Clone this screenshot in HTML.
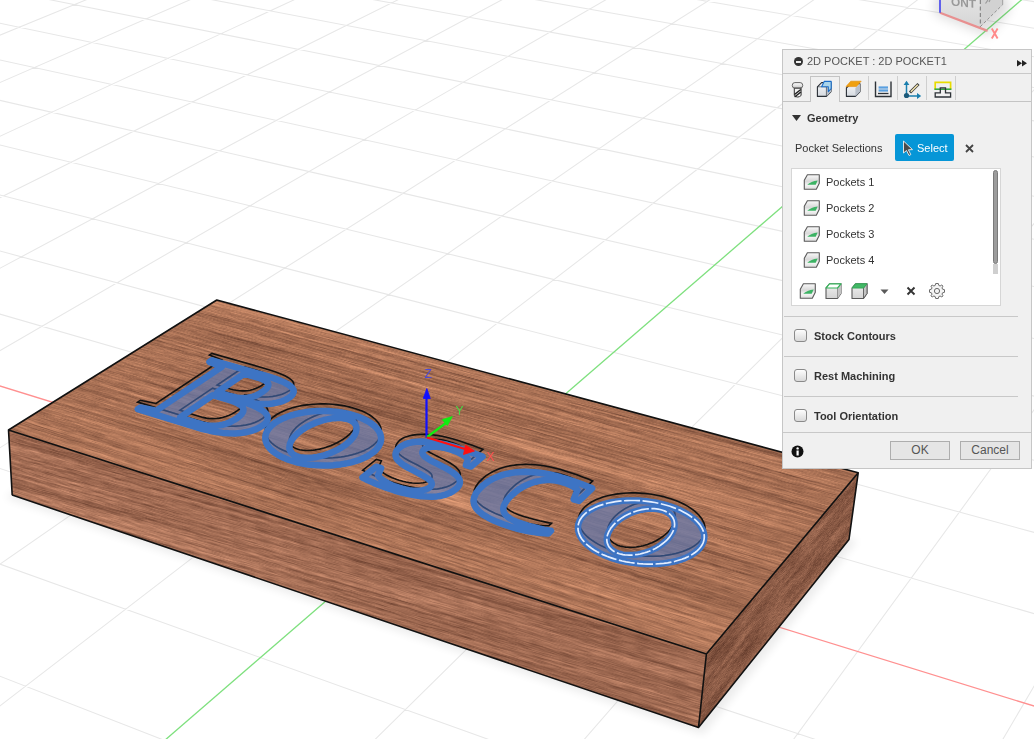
<!DOCTYPE html>
<html><head><meta charset="utf-8">
<style>
html,body{margin:0;padding:0;width:1034px;height:739px;overflow:hidden;background:#fff;font-family:"Liberation Sans",sans-serif;}
.face{position:absolute;left:0;top:0;transform-origin:0 0;}
#scene{position:absolute;left:0;top:0;width:1034px;height:739px;}
#panel{position:absolute;left:782px;top:49px;width:248px;height:418px;background:#f0f0f0;border:1px solid #c6c6c6;box-sizing:content-box;color:#333;font-size:11px;}
.abs{position:absolute;}
.hdr{left:0;top:0;width:248px;height:23px;border-bottom:1px solid #c9c9c9;}
.title{left:24px;top:5px;color:#555;font-size:11px;letter-spacing:0px;white-space:nowrap;}
.minus{left:11px;top:7px;width:9px;height:9px;border-radius:50%;background:#333;}
.minus:after{content:"";position:absolute;left:2px;top:3.5px;width:5px;height:2px;background:#f0f0f0;}
.tabs{left:0;top:24px;width:248px;height:27px;border-bottom:1px solid #c4c4c4;}
.tab-act{left:27px;top:2px;width:30px;height:26px;border:1px solid #c4c4c4;border-bottom:none;background:#f0f0f0;box-sizing:border-box;}
.sep{top:2px;width:1px;height:24px;background:#cfcfcf;}
.sec{font-weight:bold;font-size:11px;color:#333;white-space:nowrap;}
.cb{width:11px;height:11px;border:1px solid #8a8a8a;border-radius:3px;background:linear-gradient(#fdfdfd,#d9d9d9);}
.hr{left:1px;width:234px;height:1px;background:#c8c8c8;}
.btn{height:17px;border:1px solid #adadad;background:#e5e5e5;color:#555;font-size:12px;text-align:center;line-height:17px;}
.lst{left:8px;top:118px;width:208px;height:136px;background:#fff;border:1px solid #d6d6d6;}
.item{left:43px;font-size:11px;color:#333;white-space:nowrap;}
</style></head><body>
<div id="scene"><svg width="1034" height="739" viewBox="0 0 1034 739" style="position:absolute;left:0;top:0">
<defs><filter id="blur6" x="-20%" y="-20%" width="140%" height="140%"><feGaussianBlur stdDeviation="6"/></filter><filter id="blur4" x="-20%" y="-20%" width="140%" height="140%"><feGaussianBlur stdDeviation="4"/></filter></defs>
<path d="M-4791.2 240L264.9 -496.2M-4821.8 265.1L288.5 -494.8M-4854.1 291.7L312.5 -493.3M-4888.2 319.6L336.8 -491.8M-4924.2 349.1L361.3 -490.3M-4962.2 380.4L386.2 -488.8M-5002.5 413.5L411.4 -487.3M-5045.3 448.6L436.9 -485.8M-5090.9 486L462.7 -484.2M-5139.3 525.8L488.9 -482.6M-5191.1 568.3L515.4 -481M-5246.5 613.8L542.2 -479.4M-5305.9 662.5L569.4 -477.7M-5369.8 715L597 -476.1M-5438.7 771.5L624.9 -474.4M-5513.2 832.7L653.2 -472.7M-5594 899L681.9 -470.9M-5681.9 971.2L710.9 -469.2M-5778 1050.1L740.4 -467.4M-5883.5 1136.7L770.3 -465.6M-5999.7 1232.1L800.6 -463.7M-6128.5 1337.8L831.3 -461.9M-6271.9 1455.6L862.4 -460M-6432.6 1587.5L894 -458.1M-6614 1736.4L926 -456.1M-6820.3 1905.7L958.5 -454.2M-7056.9 2100L991.4 -452.2M-7331.2 2325.2L1024.8 -450.1M-7653 2589.3L1058.7 -448.1M-8035.6 2903.4L1093.2 -446M-8498.1 3283.1L1128.1 -443.9M-9068.6 3751.4L1163.5 -441.7M-9789.7 4343.4L1199.5 -439.6M-10730.4 5115.6L1236 -437.3M-12008.7 6165L1273.1 -435.1M-13846.3 7673.6L1310.8 -432.8M-16713.1 10027L1349 -430.5M-21809.7 14211L1387.9 -428.1M-33393.9 23720.8L1427.4 -425.7M-30520.4 24191.3L1467.4 -423.3M-23419.5 24193.6L1549.6 -418.3M-19869.1 24194.7L1591.6 -415.8M-16318.6 24195.9L1634.4 -413.2M-12768.2 24197L1677.9 -410.6M-9217.7 24198.1L1722.1 -407.9M-5667.3 24199.3L1767 -405.2M-2116.9 24200.4L1812.7 -402.4M1433.6 24201.6L1859.2 -399.6M4984 24202.7L1906.5 -396.7M8534.5 24203.8L1954.6 -393.8M12084.9 24205L2003.6 -390.8M15635.4 24206.1L2053.4 -387.8M19185.8 24207.2L2104.1 -384.7M22736.2 24208.4L2155.8 -381.6M26286.7 24209.5L2208.4 -378.4M29837.1 24210.6L2261.9 -375.2M33387.6 24211.8L2316.5 -371.9M36938 24212.9L2372 -368.5M40488.4 24214.1L2428.7 -365.1M44038.9 24215.2L2486.4 -361.6M47589.3 24216.3L2545.2 -358M51139.8 24217.5L2605.2 -354.4M54690.2 24218.6L2666.3 -350.7M58240.6 24219.7L2728.7 -346.9M61791.1 24220.9L2792.3 -343M65341.5 24222L2857.2 -339.1M68892 24223.2L2923.4 -335.1M72442.4 24224.3L2991 -331M75992.8 24225.4L3060.1 -326.8M79543.3 24226.6L3130.5 -322.5M83093.7 24227.7L3202.5 -318.2M86644.2 24228.8L3276.1 -313.7M90194.6 24230L3351.2 -309.2M93745 24231.1L3428 -304.5M97295.5 24232.3L3506.5 -299.8M100845.9 24233.4L3586.8 -294.9M104396.4 24234.5L3669 -289.9M107946.8 24235.7L3753 -284.8M111497.3 24236.8L3839 -279.6M115047.7 24237.9L3927 -274.3M-4791.2 240L-33965.7 24190.2M-4538.3 203.1L-28416.2 24192M-4303.8 169L-22866.7 24193.8M-4086 137.3L-17317.1 24195.5M-3883 107.7L-11767.6 24197.3M-3693.4 80.1L-6218.1 24199.1M-3515.9 54.3L-668.5 24200.9M-3349.4 30.1L4881 24202.7M-3192.9 7.3L10430.5 24204.4M-3045.5 -14.2L15980.1 24206.2M-2906.5 -34.4L21529.6 24208M-2775.1 -53.6L27079.1 24209.8M-2650.8 -71.7L32628.7 24211.5M-2532.9 -88.8L38178.2 24213.3M-2421.1 -105.1L43727.7 24215.1M-2314.7 -120.6L49277.3 24216.9M-2213.6 -135.3L54826.8 24218.7M-2117.2 -149.4L60376.3 24220.4M-2025.3 -162.7L65925.9 24222.2M-1937.5 -175.5L71475.4 24224M-1773.3 -199.4L82574.4 24227.5M-1696.4 -210.6L88124 24229.3M-1622.7 -221.4L93673.5 24231.1M-1552 -231.7L99223 24232.9M-1484.1 -241.5L104772.6 24234.6M-1418.8 -251L110322.1 24236.4M-1356.1 -260.2L100238.8 20971.2M-1295.6 -269L54156.7 10806M-1237.5 -277.5L37475.4 7126.2M-1181.4 -285.6L28862.9 5226.4M-1127.3 -293.5L23605 4066.5M-1075.1 -301.1L20061.3 3284.8M-1024.7 -308.4L17510.9 2722.2M-975.9 -315.5L15587.5 2297.9M-928.8 -322.4L14085.3 1966.6M-883.3 -329L12879.5 1700.6M-839.2 -335.4L11890.3 1482.4M-796.5 -341.7L11064.1 1300.1M-755.1 -347.7L10363.7 1145.6M-715 -353.5L9762.5 1013M-676.1 -359.2L9240.7 897.9M-638.3 -364.7L8783.5 797M-601.7 -370L8379.7 708M-566.1 -375.2L8020.5 628.7M-531.5 -380.2L7698.8 557.8M-497.9 -385.1L7409.1 493.8M-465.3 -389.9L7146.7 436M-433.5 -394.5L6908.1 383.3M-402.6 -399L6690.1 335.2M-372.4 -403.4L6490.2 291.1M-343.1 -407.7L6306.2 250.6M-314.6 -411.8L6136.2 213.1M-286.7 -415.9L5978.8 178.3M-259.6 -419.8L5832.6 146.1M-233.2 -423.7L5696.4 116M-207.4 -427.4L5569.3 88M-182.2 -431.1L5450.3 61.8M-157.6 -434.7L5338.7 37.1M-133.6 -438.2L5233.9 14M-110.2 -441.6L5135.2 -7.8M-87.3 -444.9L5042.1 -28.3M-65 -448.2L4954.2 -47.7M-43.1 -451.3L4871 -66M-21.8 -454.5L4792.2 -83.4M-0.9 -457.5L4717.4 -99.9M19.6 -460.5L4646.3 -115.6M39.6 -463.4L4578.7 -130.5M59.1 -466.2L4514.3 -144.7M78.3 -469L4452.8 -158.3M97 -471.7L4394.2 -171.2M115.4 -474.4L4338.2 -183.6M133.3 -477L4284.6 -195.4M151 -479.6L4233.2 -206.7M168.2 -482.1L4184 -217.6M185.1 -484.6L4136.8 -228M201.7 -487L4091.5 -238M218 -489.4L4048 -247.6M233.9 -491.7L4006.1 -256.8M249.5 -494L3965.8 -265.7M264.9 -496.2L3927 -274.3" stroke="#e7e7e7" stroke-width="1.05" fill="none"/>
<path d="M-1853.6 -187.7L77024.9 24225.8" stroke="#ff9090" stroke-width="1.3" fill="none"/>
<path d="M-26969.9 24192.5L1508.2 -420.8" stroke="#7ee07e" stroke-width="1.3" fill="none"/>
<polygon points="5.2,497.4 703.2,734.6 857.4,540.3 217.3,359.5" fill="#000" opacity="0.07" filter="url(#blur4)"/>
</svg>
<div class="face" style="width:1000px;height:200px;overflow:hidden;transform:matrix3d(0.58360849,0.1182101,0,-0.00016173076,0.019106479,0.36231869,0,7.486625e-05,0,0,1,0,8.5290133,430.04686,0,1)"><svg width="1000" height="200"><filter id="wf" x="0" y="0" width="100%" height="100%" color-interpolation-filters="sRGB"><feTurbulence type="fractalNoise" baseFrequency="0.002 0.03" numOctaves="3" seed="21"/><feColorMatrix type="matrix" values="1 0 0 0 0  1 0 0 0 0  1 0 0 0 0  0 0 0 0 1" result="lo"/><feTurbulence type="fractalNoise" baseFrequency="0.006 0.12" numOctaves="2" seed="5"/><feColorMatrix type="matrix" values="1 0 0 0 0  1 0 0 0 0  1 0 0 0 0  0 0 0 0 1" result="mid"/><feTurbulence type="fractalNoise" baseFrequency="0.05 0.35" numOctaves="2" seed="17"/><feColorMatrix type="matrix" values="1 0 0 0 0  1 0 0 0 0  1 0 0 0 0  0 0 0 0 1" result="hi"/><feComposite in="lo" in2="mid" operator="arithmetic" k1="0" k2="0.6" k3="0.5" k4="0" result="lm"/><feComposite in="lm" in2="hi" operator="arithmetic" k1="0" k2="1" k3="0.45" k4="-0.275" result="n"/><feColorMatrix in="n" type="matrix" values="0.6 0 0 0 0.33  0.48 0 0 0 0.18  0.4 0 0 0 0.125  0 0 0 0 1"/></filter><g transform="rotate(-5 500 100)"><rect x="-100" y="-150" width="1200" height="500" filter="url(#wf)"/></g></svg></div>
<div class="face" style="width:500px;height:200px;overflow:hidden;transform:matrix3d(0.56238993,-0.21988844,0,0.0003015666,0.022792771,0.43222233,0,8.9310506e-05,0,0,1,0,706.38105,654.03445,0,1)"><svg width="500" height="200"><filter id="wr" x="0" y="0" width="100%" height="100%" color-interpolation-filters="sRGB"><feTurbulence type="fractalNoise" baseFrequency="0.01 0.04" numOctaves="2" seed="31"/><feColorMatrix type="matrix" values="1 0 0 0 0  1 0 0 0 0  1 0 0 0 0  0 0 0 0 1" result="lo"/><feTurbulence type="fractalNoise" baseFrequency="0.12 0.3" numOctaves="2" seed="2"/><feColorMatrix type="matrix" values="1 0 0 0 0  1 0 0 0 0  1 0 0 0 0  0 0 0 0 1" result="hi"/><feComposite in="lo" in2="hi" operator="arithmetic" k1="0" k2="0.6" k3="0.5" k4="-0.05" result="n"/><feColorMatrix in="n" type="matrix" values="0.5 0 0 0 0.29  0.4 0 0 0 0.152  0.33 0 0 0 0.105  0 0 0 0 1"/></filter><rect width="500" height="200" filter="url(#wr)"/></svg></div>
<div class="face" style="width:1000px;height:500px;transform:matrix3d(0.51811971,0.10494533,0,-0.00014358238,-0.41853288,0.16364187,0,-0.00022442709,0,0,1,0,216.83838,299.96884,0,1)"><svg width="1000" height="500"><filter id="wt" x="0" y="0" width="100%" height="100%" color-interpolation-filters="sRGB"><feTurbulence type="fractalNoise" baseFrequency="0.0015 0.022" numOctaves="3" seed="4"/><feColorMatrix type="matrix" values="1 0 0 0 0  1 0 0 0 0  1 0 0 0 0  0 0 0 0 1" result="lo"/><feTurbulence type="fractalNoise" baseFrequency="0.004 0.16" numOctaves="3" seed="9"/><feColorMatrix type="matrix" values="1 0 0 0 0  1 0 0 0 0  1 0 0 0 0  0 0 0 0 1" result="mid"/><feTurbulence type="fractalNoise" baseFrequency="0.05 0.45" numOctaves="2" seed="13"/><feColorMatrix type="matrix" values="1 0 0 0 0  1 0 0 0 0  1 0 0 0 0  0 0 0 0 1" result="hi"/><feComposite in="lo" in2="mid" operator="arithmetic" k1="0" k2="0.4" k3="0.6" k4="0" result="lm"/><feComposite in="lm" in2="hi" operator="arithmetic" k1="0" k2="1" k3="0.4" k4="-0.2" result="n"/><feColorMatrix in="n" type="matrix" values="0.63 0 0 0 0.35  0.48 0 0 0 0.205  0.37 0 0 0 0.15  0 0 0 0 1"/></filter><rect width="1000" height="500" filter="url(#wt)"/></svg></div>

<svg width="1034" height="739" viewBox="0 0 1034 739" style="position:absolute;left:0;top:0">
<path d="M140.3 400.3L137.6 402.1L157.8 408.2L195.2 419.8L202.5 421.9L209.5 423.5L216.3 424.8L222.8 425.6L229 426.1L235 426.2L240.5 425.8L245.7 425.1L250.5 424L254.9 422.5L259 420.6L262.7 418.3L264.9 416.4L266.5 414.7L267.5 412.9L267.9 411.1L267.6 409.3L266.8 407.6L265.4 405.8L263.4 404L260.7 402.2L257.5 400.5L253.6 398.7L243.8 394.9L243.8 394.9L254.5 396.4L258.2 396.8L261.9 397L265.6 397L269.1 396.8L272.7 396.4L276.1 395.8L279.2 395.1L282.1 394.2L284.7 393.1L287.1 391.9L289.3 390.6L291.6 388.6L293.1 386.7L293.8 384.9L293.6 383.1L292.7 381.3L291 379.5L288.4 377.7L285 375.8L280.8 373.9L275.7 371.9L269.7 369.9L262.9 367.9L211.9 353.4L209.4 355.1L221.7 359.9L156 403.5ZM239.6 409L237.3 410.7L234.5 412.5L231.6 414.1L228.7 415.5L225.7 416.6L222.7 417.5L219.5 418.1L216.3 418.5L213.1 418.6L209.7 418.5L206.4 418.1L203 417.4L199.7 416.5L197.2 415.8L194.5 414.9L191.5 414L188.3 412.9L184.8 411.8L180 410.2L212.6 388.2L228 392.7L231.9 393.9L235.3 395.2L238.1 396.6L240.4 397.9L242 399.4L243 400.8L243.4 402.4L243.3 403.9L242.6 405.6L241.4 407.2ZM264.9 383L263 384.5L260.5 386.1L258 387.5L255.5 388.6L252.9 389.5L250.3 390.2L247.6 390.7L244.9 390.9L242.1 390.9L239.2 390.7L236.3 390.3L233.3 389.7L230.4 389L217.1 385.1L244.2 366.8L256.7 370.3L259.7 371.2L262.3 372.2L264.4 373.2L266.1 374.3L267.4 375.4L268.1 376.5L268.4 377.7L268.2 378.9L267.5 380.2L266.5 381.6Z" fill="#2a1508" fill-opacity="0.12" fill-rule="nonzero"/>
<path d="M140.3 400.3L137.6 402.1L157.8 408.2L195.2 419.8L202.5 421.9L209.5 423.5L216.3 424.8L222.8 425.6L229 426.1L235 426.2L240.5 425.8L245.7 425.1L250.5 424L254.9 422.5L259 420.6L262.7 418.3L264.9 416.4L266.5 414.7L267.5 412.9L267.9 411.1L267.6 409.3L266.8 407.6L265.4 405.8L263.4 404L260.7 402.2L257.5 400.5L253.6 398.7L243.8 394.9L243.8 394.9L254.5 396.4L258.2 396.8L261.9 397L265.6 397L269.1 396.8L272.7 396.4L276.1 395.8L279.2 395.1L282.1 394.2L284.7 393.1L287.1 391.9L289.3 390.6L291.6 388.6L293.1 386.7L293.8 384.9L293.6 383.1L292.7 381.3L291 379.5L288.4 377.7L285 375.8L280.8 373.9L275.7 371.9L269.7 369.9L262.9 367.9L211.9 353.4L209.4 355.1L221.7 359.9L156 403.5ZM239.6 409L237.3 410.7L234.5 412.5L231.6 414.1L228.7 415.5L225.7 416.6L222.7 417.5L219.5 418.1L216.3 418.5L213.1 418.6L209.7 418.5L206.4 418.1L203 417.4L199.7 416.5L197.2 415.8L194.5 414.9L191.5 414L188.3 412.9L184.8 411.8L180 410.2L212.6 388.2L228 392.7L231.9 393.9L235.3 395.2L238.1 396.6L240.4 397.9L242 399.4L243 400.8L243.4 402.4L243.3 403.9L242.6 405.6L241.4 407.2ZM264.9 383L263 384.5L260.5 386.1L258 387.5L255.5 388.6L252.9 389.5L250.3 390.2L247.6 390.7L244.9 390.9L242.1 390.9L239.2 390.7L236.3 390.3L233.3 389.7L230.4 389L217.1 385.1L244.2 366.8L256.7 370.3L259.7 371.2L262.3 372.2L264.4 373.2L266.1 374.3L267.4 375.4L268.1 376.5L268.4 377.7L268.2 378.9L267.5 380.2L266.5 381.6Z" fill="none" stroke="#111" stroke-width="1.6"/>
<path d="M373.3 445.1L375.1 443.5L376.7 441.9L378.1 440.3L379.2 438.6L380.1 436.8L380.8 435.1L381.2 433.3L381.3 431.5L381.2 429.8L380.9 428L380.3 426.2L379.4 424.5L378.3 422.8L377 421.2L375.5 419.5L373.8 418L371.8 416.5L369.7 415L367.3 413.6L364.8 412.3L362.1 411.1L359.2 409.9L356.3 408.9L353.1 407.9L349.9 407.1L346.5 406.3L343.1 405.6L339.5 405.1L335.9 404.6L332.3 404.2L328.6 404L324.9 403.9L321.2 403.9L317.5 404L313.8 404.2L310.2 404.5L306.6 404.9L303.1 405.4L299.7 406L296.3 406.8L293.1 407.6L290 408.6L287 409.6L284.2 410.7L281.5 411.9L279 413.2L276.7 414.5L274.6 416L272.6 417.4L270.9 419L269.4 420.6L268.2 422.2L267.1 423.9L266.3 425.7L265.7 427.4L265.4 429.2L265.4 430.9L265.5 432.7L266 434.5L266.6 436.2L267.5 438L268.7 439.7L270.1 441.4L271.7 443L273.6 444.6L275.7 446.1L278 447.6L280.5 449L283.2 450.3L286.1 451.5L289.1 452.6L292.3 453.7L295.6 454.6L299.1 455.5L302.7 456.2L306.3 456.8L310.1 457.3L313.9 457.7L317.7 457.9L321.6 458.1L325.5 458.1L329.4 458L333.2 457.8L337 457.4L340.8 457L344.4 456.4L348 455.7L351.4 454.9L354.8 454L357.9 453L361 451.9L363.8 450.7L366.5 449.4L369 448.1L371.2 446.6ZM344.4 438.3L342.7 439.5L340.8 440.6L338.9 441.7L336.9 442.8L334.9 443.8L332.8 444.8L330.6 445.7L328.4 446.5L326.2 447.3L324 447.9L321.8 448.5L319.5 449.1L317.3 449.5L315.1 449.9L313 450.2L310.9 450.4L308.8 450.5L306.8 450.5L304.9 450.4L303.1 450.3L301.3 450L299.7 449.7L298.1 449.3L296.7 448.8L295.4 448.2L294.2 447.6L293.1 446.9L292.1 446.1L291.3 445.2L290.7 444.3L290.2 443.3L289.8 442.3L289.5 441.2L289.5 440L289.5 438.9L289.7 437.7L290.1 436.4L290.6 435.2L291.2 433.9L292 432.6L292.9 431.3L293.9 430L295.1 428.7L296.3 427.4L297.7 426.2L299.2 424.9L300.8 423.7L302.5 422.5L304.2 421.4L306.1 420.2L308 419.2L310 418.2L312 417.2L314.1 416.3L316.2 415.4L318.3 414.6L320.5 413.9L322.6 413.3L324.8 412.7L327 412.2L329.1 411.8L331.2 411.4L333.3 411.2L335.3 411L337.3 410.9L339.2 410.9L341.1 410.9L342.9 411.1L344.6 411.3L346.2 411.6L347.7 412L349.1 412.5L350.4 413L351.6 413.6L352.7 414.3L353.7 415L354.5 415.9L355.2 416.7L355.7 417.7L356.2 418.7L356.5 419.7L356.6 420.8L356.6 422L356.5 423.1L356.2 424.3L355.8 425.6L355.2 426.8L354.5 428.1L353.7 429.4L352.7 430.7L351.6 432L350.4 433.3L349.1 434.6L347.6 435.8L346.1 437.1Z" fill="#2a1508" fill-opacity="0.12" fill-rule="nonzero"/>
<path d="M373.3 445.1L375.1 443.5L376.7 441.9L378.1 440.3L379.2 438.6L380.1 436.8L380.8 435.1L381.2 433.3L381.3 431.5L381.2 429.8L380.9 428L380.3 426.2L379.4 424.5L378.3 422.8L377 421.2L375.5 419.5L373.8 418L371.8 416.5L369.7 415L367.3 413.6L364.8 412.3L362.1 411.1L359.2 409.9L356.3 408.9L353.1 407.9L349.9 407.1L346.5 406.3L343.1 405.6L339.5 405.1L335.9 404.6L332.3 404.2L328.6 404L324.9 403.9L321.2 403.9L317.5 404L313.8 404.2L310.2 404.5L306.6 404.9L303.1 405.4L299.7 406L296.3 406.8L293.1 407.6L290 408.6L287 409.6L284.2 410.7L281.5 411.9L279 413.2L276.7 414.5L274.6 416L272.6 417.4L270.9 419L269.4 420.6L268.2 422.2L267.1 423.9L266.3 425.7L265.7 427.4L265.4 429.2L265.4 430.9L265.5 432.7L266 434.5L266.6 436.2L267.5 438L268.7 439.7L270.1 441.4L271.7 443L273.6 444.6L275.7 446.1L278 447.6L280.5 449L283.2 450.3L286.1 451.5L289.1 452.6L292.3 453.7L295.6 454.6L299.1 455.5L302.7 456.2L306.3 456.8L310.1 457.3L313.9 457.7L317.7 457.9L321.6 458.1L325.5 458.1L329.4 458L333.2 457.8L337 457.4L340.8 457L344.4 456.4L348 455.7L351.4 454.9L354.8 454L357.9 453L361 451.9L363.8 450.7L366.5 449.4L369 448.1L371.2 446.6ZM344.4 438.3L342.7 439.5L340.8 440.6L338.9 441.7L336.9 442.8L334.9 443.8L332.8 444.8L330.6 445.7L328.4 446.5L326.2 447.3L324 447.9L321.8 448.5L319.5 449.1L317.3 449.5L315.1 449.9L313 450.2L310.9 450.4L308.8 450.5L306.8 450.5L304.9 450.4L303.1 450.3L301.3 450L299.7 449.7L298.1 449.3L296.7 448.8L295.4 448.2L294.2 447.6L293.1 446.9L292.1 446.1L291.3 445.2L290.7 444.3L290.2 443.3L289.8 442.3L289.5 441.2L289.5 440L289.5 438.9L289.7 437.7L290.1 436.4L290.6 435.2L291.2 433.9L292 432.6L292.9 431.3L293.9 430L295.1 428.7L296.3 427.4L297.7 426.2L299.2 424.9L300.8 423.7L302.5 422.5L304.2 421.4L306.1 420.2L308 419.2L310 418.2L312 417.2L314.1 416.3L316.2 415.4L318.3 414.6L320.5 413.9L322.6 413.3L324.8 412.7L327 412.2L329.1 411.8L331.2 411.4L333.3 411.2L335.3 411L337.3 410.9L339.2 410.9L341.1 410.9L342.9 411.1L344.6 411.3L346.2 411.6L347.7 412L349.1 412.5L350.4 413L351.6 413.6L352.7 414.3L353.7 415L354.5 415.9L355.2 416.7L355.7 417.7L356.2 418.7L356.5 419.7L356.6 420.8L356.6 422L356.5 423.1L356.2 424.3L355.8 425.6L355.2 426.8L354.5 428.1L353.7 429.4L352.7 430.7L351.6 432L350.4 433.3L349.1 434.6L347.6 435.8L346.1 437.1Z" fill="none" stroke="#111" stroke-width="1.6"/>
<path d="M456.4 481.4L458.2 479.7L459.4 478L460.1 476.3L460.3 474.5L460 472.8L459.3 471L457.9 469.2L456 467.2L453.3 465.2L450.1 463L446.1 460.8L441.6 458.4L437.3 456.3L433.6 454.4L430.4 452.7L427.9 451.2L425.8 449.8L424.4 448.6L423.4 447.5L422.8 446.4L422.6 445.3L422.8 444.3L423.4 443.3L424.3 442.3L425.5 441.5L426.9 440.8L428.4 440.2L430.2 439.8L432.1 439.5L434.2 439.4L436.5 439.4L438.8 439.6L441.3 439.9L443.9 440.4L446.6 441L449.5 441.8L451.4 442.4L453.3 443.1L455.2 443.8L457 444.5L458.9 445.3L460.7 446.2L462.4 447.1L463.9 448L465.2 448.9L466.4 449.8L467.4 450.7L468.3 451.8L466.2 457.7L471.4 459.2L483 449.3L478.1 447.4L472.3 445.3L466.9 443.4L461.9 441.7L457.4 440.3L453.2 439L447.5 437.5L442 436.3L436.6 435.4L431.4 434.7L426.3 434.4L421.4 434.3L416.7 434.6L412.6 435.1L408.8 435.9L405.6 436.9L402.7 438.3L400.1 440L398.3 441.7L397 443.4L396.1 445.1L395.7 446.8L395.8 448.5L396.4 450.3L397.5 452.1L399.2 454.1L401.7 456.1L404.8 458.3L408.5 460.5L413 462.8L417.4 465L421.2 467.1L424.4 468.9L427 470.5L429 471.9L430.4 473.1L431.4 474.2L431.9 475.4L432.1 476.5L431.9 477.6L431.3 478.7L430.2 479.7L428.9 480.7L427.2 481.5L425.3 482.2L423.1 482.7L420.7 483L418.1 483.2L415.3 483.2L412.4 483L409.3 482.6L406 482L402.7 481.2L399.1 480.2L396.7 479.4L394.4 478.6L392.2 477.7L390.1 476.7L388.1 475.7L386.2 474.7L384.4 473.6L382.8 472.5L381.4 471.4L380.2 470.4L379.2 469.3L378.2 468L381.4 460.8L376.3 459.3L362.7 470.2L363.4 470.5L365.3 471.5L367.5 472.5L370 473.7L372.8 474.9L375.9 476.2L379.2 477.5L382.4 478.8L385.5 479.9L388.7 481L391.7 482.1L394.7 483L401.9 485L408.7 486.6L415.1 487.9L421.2 488.7L427 489.1L432.4 489.2L437.4 488.9L442 488.1L446.1 487.1L449.9 485.6L453.4 483.7Z" fill="#2a1508" fill-opacity="0.12" fill-rule="nonzero"/>
<path d="M456.4 481.4L458.2 479.7L459.4 478L460.1 476.3L460.3 474.5L460 472.8L459.3 471L457.9 469.2L456 467.2L453.3 465.2L450.1 463L446.1 460.8L441.6 458.4L437.3 456.3L433.6 454.4L430.4 452.7L427.9 451.2L425.8 449.8L424.4 448.6L423.4 447.5L422.8 446.4L422.6 445.3L422.8 444.3L423.4 443.3L424.3 442.3L425.5 441.5L426.9 440.8L428.4 440.2L430.2 439.8L432.1 439.5L434.2 439.4L436.5 439.4L438.8 439.6L441.3 439.9L443.9 440.4L446.6 441L449.5 441.8L451.4 442.4L453.3 443.1L455.2 443.8L457 444.5L458.9 445.3L460.7 446.2L462.4 447.1L463.9 448L465.2 448.9L466.4 449.8L467.4 450.7L468.3 451.8L466.2 457.7L471.4 459.2L483 449.3L478.1 447.4L472.3 445.3L466.9 443.4L461.9 441.7L457.4 440.3L453.2 439L447.5 437.5L442 436.3L436.6 435.4L431.4 434.7L426.3 434.4L421.4 434.3L416.7 434.6L412.6 435.1L408.8 435.9L405.6 436.9L402.7 438.3L400.1 440L398.3 441.7L397 443.4L396.1 445.1L395.7 446.8L395.8 448.5L396.4 450.3L397.5 452.1L399.2 454.1L401.7 456.1L404.8 458.3L408.5 460.5L413 462.8L417.4 465L421.2 467.1L424.4 468.9L427 470.5L429 471.9L430.4 473.1L431.4 474.2L431.9 475.4L432.1 476.5L431.9 477.6L431.3 478.7L430.2 479.7L428.9 480.7L427.2 481.5L425.3 482.2L423.1 482.7L420.7 483L418.1 483.2L415.3 483.2L412.4 483L409.3 482.6L406 482L402.7 481.2L399.1 480.2L396.7 479.4L394.4 478.6L392.2 477.7L390.1 476.7L388.1 475.7L386.2 474.7L384.4 473.6L382.8 472.5L381.4 471.4L380.2 470.4L379.2 469.3L378.2 468L381.4 460.8L376.3 459.3L362.7 470.2L363.4 470.5L365.3 471.5L367.5 472.5L370 473.7L372.8 474.9L375.9 476.2L379.2 477.5L382.4 478.8L385.5 479.9L388.7 481L391.7 482.1L394.7 483L401.9 485L408.7 486.6L415.1 487.9L421.2 488.7L427 489.1L432.4 489.2L437.4 488.9L442 488.1L446.1 487.1L449.9 485.6L453.4 483.7Z" fill="none" stroke="#111" stroke-width="1.6"/>
<path d="M548.9 525.7L551.5 523.2L549.5 522.9L544.7 521.9L539.7 520.8L534.5 519.5L529.2 518.1L523.7 516.5L518.6 514.8L514.1 512.9L510.4 510.9L507.5 508.8L505.4 506.5L504.1 504.2L503.7 501.7L504.1 499L505.2 496.2L507.2 493.2L509.9 490L513.3 486.7L515.6 484.7L518 482.9L520.4 481.2L522.9 479.7L525.5 478.3L528.1 477.1L530.8 476L533.5 475.1L536.3 474.3L539.1 473.6L542 473.2L544.8 472.8L547.7 472.7L550.5 472.6L553.3 472.8L556 473.1L558.7 473.6L561.2 474.2L563.3 474.8L565.2 475.5L566.9 476.1L568.5 476.7L570 477.2L571.3 477.8L572.5 478.4L573.6 479.1L574.7 479.8L575.7 480.5L576.7 481.3L578 482.4L574.3 491.8L579.5 493.4L592.7 480.9L588.3 479.1L582.6 476.9L577 474.8L571.5 472.9L566 471.2L560.7 469.6L555.5 468.2L550.3 467L545.3 466L540.3 465.3L535.3 464.8L530.4 464.5L525.6 464.4L521 464.5L516.5 464.9L512.1 465.5L507.9 466.2L503.8 467.3L499.9 468.5L496.2 470L492.6 471.7L489.3 473.6L486.1 475.7L483.1 478.1L479 482.1L476.2 486L474.4 489.8L473.9 493.4L474.5 497L476.2 500.4L479.2 503.7L483.3 507L488.7 510.2L495.3 513.4L503.2 516.5L512.4 519.5L515.6 520.4L519 521.3L522.3 522.1L525.7 522.9L529.1 523.6L532.6 524.2L536 524.7L539.1 525.2L542.1 525.5L544.9 525.7L547.5 525.7Z" fill="#2a1508" fill-opacity="0.12" fill-rule="nonzero"/>
<path d="M548.9 525.7L551.5 523.2L549.5 522.9L544.7 521.9L539.7 520.8L534.5 519.5L529.2 518.1L523.7 516.5L518.6 514.8L514.1 512.9L510.4 510.9L507.5 508.8L505.4 506.5L504.1 504.2L503.7 501.7L504.1 499L505.2 496.2L507.2 493.2L509.9 490L513.3 486.7L515.6 484.7L518 482.9L520.4 481.2L522.9 479.7L525.5 478.3L528.1 477.1L530.8 476L533.5 475.1L536.3 474.3L539.1 473.6L542 473.2L544.8 472.8L547.7 472.7L550.5 472.6L553.3 472.8L556 473.1L558.7 473.6L561.2 474.2L563.3 474.8L565.2 475.5L566.9 476.1L568.5 476.7L570 477.2L571.3 477.8L572.5 478.4L573.6 479.1L574.7 479.8L575.7 480.5L576.7 481.3L578 482.4L574.3 491.8L579.5 493.4L592.7 480.9L588.3 479.1L582.6 476.9L577 474.8L571.5 472.9L566 471.2L560.7 469.6L555.5 468.2L550.3 467L545.3 466L540.3 465.3L535.3 464.8L530.4 464.5L525.6 464.4L521 464.5L516.5 464.9L512.1 465.5L507.9 466.2L503.8 467.3L499.9 468.5L496.2 470L492.6 471.7L489.3 473.6L486.1 475.7L483.1 478.1L479 482.1L476.2 486L474.4 489.8L473.9 493.4L474.5 497L476.2 500.4L479.2 503.7L483.3 507L488.7 510.2L495.3 513.4L503.2 516.5L512.4 519.5L515.6 520.4L519 521.3L522.3 522.1L525.7 522.9L529.1 523.6L532.6 524.2L536 524.7L539.1 525.2L542.1 525.5L544.9 525.7L547.5 525.7Z" fill="none" stroke="#111" stroke-width="1.6"/>
<path d="M700 541L701.5 539.2L702.8 537.3L703.8 535.4L704.5 533.4L704.9 531.4L705.1 529.3L705 527.3L704.6 525.2L704 523.1L703 521.1L701.9 519L700.4 517L698.8 515L696.9 513.1L694.7 511.2L692.4 509.4L689.8 507.6L687.1 505.9L684.1 504.3L681 502.8L677.7 501.3L674.3 500L670.8 498.8L667.1 497.7L663.3 496.6L659.5 495.7L655.6 495L651.6 494.3L647.6 493.8L643.6 493.4L639.5 493.1L635.5 492.9L631.5 492.9L627.5 493L623.6 493.3L619.8 493.6L616 494.1L612.4 494.7L608.9 495.5L605.5 496.3L602.3 497.3L599.2 498.4L596.3 499.6L593.5 500.9L591 502.3L588.7 503.8L586.6 505.3L584.7 507L583.1 508.7L581.7 510.6L580.5 512.4L579.6 514.3L579 516.3L578.6 518.3L578.5 520.4L578.7 522.4L579.1 524.5L579.8 526.6L580.8 528.6L582.1 530.7L583.6 532.7L585.3 534.7L587.3 536.7L589.6 538.6L592.1 540.4L594.8 542.2L597.7 543.9L600.8 545.6L604.1 547.1L607.6 548.5L611.2 549.9L614.9 551.1L618.8 552.2L622.8 553.2L626.9 554L631.1 554.7L635.3 555.3L639.5 555.8L643.8 556.1L648 556.2L652.2 556.3L656.4 556.2L660.5 555.9L664.5 555.5L668.4 554.9L672.2 554.3L675.8 553.5L679.3 552.5L682.6 551.5L685.8 550.3L688.7 549L691.4 547.6L693.9 546.1L696.2 544.5L698.2 542.8ZM666.8 533.1L665.2 534.5L663.6 535.8L661.8 537.1L660 538.4L658.1 539.5L656.1 540.7L654 541.7L651.9 542.7L649.7 543.5L647.5 544.4L645.3 545.1L643.1 545.7L640.8 546.2L638.5 546.6L636.3 547L634.1 547.2L631.9 547.3L629.7 547.4L627.6 547.3L625.6 547.1L623.6 546.8L621.7 546.4L619.9 546L618.2 545.4L616.6 544.7L615.2 543.9L613.8 543.1L612.5 542.2L611.4 541.2L610.4 540.1L609.6 538.9L608.9 537.7L608.3 536.4L607.9 535.1L607.6 533.7L607.5 532.3L607.5 530.9L607.6 529.4L607.9 527.9L608.4 526.4L609 524.9L609.7 523.4L610.6 521.9L611.6 520.4L612.7 518.9L613.9 517.5L615.3 516L616.8 514.7L618.3 513.3L620 512L621.7 510.8L623.6 509.6L625.5 508.4L627.5 507.4L629.5 506.4L631.5 505.5L633.7 504.6L635.8 503.9L638 503.2L640.1 502.6L642.3 502.2L644.5 501.8L646.7 501.4L648.8 501.2L650.9 501.1L653 501.1L655 501.2L657 501.3L658.9 501.6L660.7 502L662.5 502.4L664.1 502.9L665.7 503.6L667.2 504.3L668.5 505.1L669.8 506L670.9 506.9L671.9 507.9L672.8 509L673.6 510.2L674.2 511.4L674.7 512.7L675 514L675.2 515.4L675.3 516.8L675.2 518.2L675 519.7L674.6 521.2L674.1 522.7L673.5 524.2L672.7 525.7L671.7 527.2L670.7 528.7L669.5 530.2L668.2 531.7Z" fill="#2a1508" fill-opacity="0.12" fill-rule="nonzero"/>
<path d="M700 541L701.5 539.2L702.8 537.3L703.8 535.4L704.5 533.4L704.9 531.4L705.1 529.3L705 527.3L704.6 525.2L704 523.1L703 521.1L701.9 519L700.4 517L698.8 515L696.9 513.1L694.7 511.2L692.4 509.4L689.8 507.6L687.1 505.9L684.1 504.3L681 502.8L677.7 501.3L674.3 500L670.8 498.8L667.1 497.7L663.3 496.6L659.5 495.7L655.6 495L651.6 494.3L647.6 493.8L643.6 493.4L639.5 493.1L635.5 492.9L631.5 492.9L627.5 493L623.6 493.3L619.8 493.6L616 494.1L612.4 494.7L608.9 495.5L605.5 496.3L602.3 497.3L599.2 498.4L596.3 499.6L593.5 500.9L591 502.3L588.7 503.8L586.6 505.3L584.7 507L583.1 508.7L581.7 510.6L580.5 512.4L579.6 514.3L579 516.3L578.6 518.3L578.5 520.4L578.7 522.4L579.1 524.5L579.8 526.6L580.8 528.6L582.1 530.7L583.6 532.7L585.3 534.7L587.3 536.7L589.6 538.6L592.1 540.4L594.8 542.2L597.7 543.9L600.8 545.6L604.1 547.1L607.6 548.5L611.2 549.9L614.9 551.1L618.8 552.2L622.8 553.2L626.9 554L631.1 554.7L635.3 555.3L639.5 555.8L643.8 556.1L648 556.2L652.2 556.3L656.4 556.2L660.5 555.9L664.5 555.5L668.4 554.9L672.2 554.3L675.8 553.5L679.3 552.5L682.6 551.5L685.8 550.3L688.7 549L691.4 547.6L693.9 546.1L696.2 544.5L698.2 542.8ZM666.8 533.1L665.2 534.5L663.6 535.8L661.8 537.1L660 538.4L658.1 539.5L656.1 540.7L654 541.7L651.9 542.7L649.7 543.5L647.5 544.4L645.3 545.1L643.1 545.7L640.8 546.2L638.5 546.6L636.3 547L634.1 547.2L631.9 547.3L629.7 547.4L627.6 547.3L625.6 547.1L623.6 546.8L621.7 546.4L619.9 546L618.2 545.4L616.6 544.7L615.2 543.9L613.8 543.1L612.5 542.2L611.4 541.2L610.4 540.1L609.6 538.9L608.9 537.7L608.3 536.4L607.9 535.1L607.6 533.7L607.5 532.3L607.5 530.9L607.6 529.4L607.9 527.9L608.4 526.4L609 524.9L609.7 523.4L610.6 521.9L611.6 520.4L612.7 518.9L613.9 517.5L615.3 516L616.8 514.7L618.3 513.3L620 512L621.7 510.8L623.6 509.6L625.5 508.4L627.5 507.4L629.5 506.4L631.5 505.5L633.7 504.6L635.8 503.9L638 503.2L640.1 502.6L642.3 502.2L644.5 501.8L646.7 501.4L648.8 501.2L650.9 501.1L653 501.1L655 501.2L657 501.3L658.9 501.6L660.7 502L662.5 502.4L664.1 502.9L665.7 503.6L667.2 504.3L668.5 505.1L669.8 506L670.9 506.9L671.9 507.9L672.8 509L673.6 510.2L674.2 511.4L674.7 512.7L675 514L675.2 515.4L675.3 516.8L675.2 518.2L675 519.7L674.6 521.2L674.1 522.7L673.5 524.2L672.7 525.7L671.7 527.2L670.7 528.7L669.5 530.2L668.2 531.7Z" fill="none" stroke="#111" stroke-width="1.6"/>
<path d="M140.5 407.4L137.8 409.2L158 415.3L195.3 427L202.6 429.1L209.6 430.7L216.4 432L222.9 432.9L229.1 433.3L235 433.4L240.6 433.1L245.7 432.3L250.5 431.2L254.9 429.7L259 427.8L262.7 425.5L264.9 423.6L266.5 421.8L267.5 420L267.8 418.3L267.6 416.5L266.8 414.7L265.4 412.9L263.3 411.1L260.7 409.4L257.5 407.6L253.7 405.8L243.8 402L243.9 402L254.5 403.5L258.2 403.9L261.9 404.1L265.5 404.1L269.1 403.9L272.6 403.5L276 402.9L279.1 402.2L282 401.3L284.7 400.2L287.1 399L289.2 397.6L291.6 395.7L293 393.8L293.7 391.9L293.6 390.1L292.6 388.3L290.9 386.5L288.4 384.7L285 382.8L280.7 380.9L275.6 378.9L269.7 376.9L262.9 374.9L212 360.3L209.5 362L221.8 366.8L156.2 410.6ZM239.6 416.1L237.3 417.9L234.5 419.7L231.7 421.3L228.8 422.7L225.8 423.8L222.7 424.7L219.6 425.3L216.4 425.7L213.1 425.8L209.8 425.7L206.5 425.3L203.1 424.6L199.8 423.7L197.3 423L194.6 422.1L191.6 421.2L188.4 420.1L184.9 419L180.1 417.4L212.7 395.2L228 399.7L232 401L235.3 402.3L238.1 403.6L240.4 405L242 406.5L243 408L243.4 409.5L243.3 411.1L242.6 412.7L241.4 414.4ZM264.9 390L263 391.5L260.5 393.1L258 394.5L255.5 395.7L252.9 396.6L250.3 397.3L247.6 397.8L244.9 398L242.1 398L239.2 397.8L236.3 397.4L233.4 396.8L230.4 396L217.2 392.1L244.2 373.7L256.7 377.3L259.7 378.2L262.3 379.2L264.4 380.2L266.1 381.3L267.3 382.4L268.1 383.5L268.4 384.7L268.2 385.9L267.5 387.3L266.4 388.6Z" fill="#687db2" fill-opacity="0.72" fill-rule="nonzero"/>
<clipPath id="cf0"><path d="M140.5 407.4L137.8 409.2L158 415.3L195.3 427L202.6 429.1L209.6 430.7L216.4 432L222.9 432.9L229.1 433.3L235 433.4L240.6 433.1L245.7 432.3L250.5 431.2L254.9 429.7L259 427.8L262.7 425.5L264.9 423.6L266.5 421.8L267.5 420L267.8 418.3L267.6 416.5L266.8 414.7L265.4 412.9L263.3 411.1L260.7 409.4L257.5 407.6L253.7 405.8L243.8 402L243.9 402L254.5 403.5L258.2 403.9L261.9 404.1L265.5 404.1L269.1 403.9L272.6 403.5L276 402.9L279.1 402.2L282 401.3L284.7 400.2L287.1 399L289.2 397.6L291.6 395.7L293 393.8L293.7 391.9L293.6 390.1L292.6 388.3L290.9 386.5L288.4 384.7L285 382.8L280.7 380.9L275.6 378.9L269.7 376.9L262.9 374.9L212 360.3L209.5 362L221.8 366.8L156.2 410.6ZM239.6 416.1L237.3 417.9L234.5 419.7L231.7 421.3L228.8 422.7L225.8 423.8L222.7 424.7L219.6 425.3L216.4 425.7L213.1 425.8L209.8 425.7L206.5 425.3L203.1 424.6L199.8 423.7L197.3 423L194.6 422.1L191.6 421.2L188.4 420.1L184.9 419L180.1 417.4L212.7 395.2L228 399.7L232 401L235.3 402.3L238.1 403.6L240.4 405L242 406.5L243 408L243.4 409.5L243.3 411.1L242.6 412.7L241.4 414.4ZM264.9 390L263 391.5L260.5 393.1L258 394.5L255.5 395.7L252.9 396.6L250.3 397.3L247.6 397.8L244.9 398L242.1 398L239.2 397.8L236.3 397.4L233.4 396.8L230.4 396L217.2 392.1L244.2 373.7L256.7 377.3L259.7 378.2L262.3 379.2L264.4 380.2L266.1 381.3L267.3 382.4L268.1 383.5L268.4 384.7L268.2 385.9L267.5 387.3L266.4 388.6Z"/></clipPath>
<path d="M140.3 400.3L137.6 402.1L157.8 408.2L195.2 419.8L202.5 421.9L209.5 423.5L216.3 424.8L222.8 425.6L229 426.1L235 426.2L240.5 425.8L245.7 425.1L250.5 424L254.9 422.5L259 420.6L262.7 418.3L264.9 416.4L266.5 414.7L267.5 412.9L267.9 411.1L267.6 409.3L266.8 407.6L265.4 405.8L263.4 404L260.7 402.2L257.5 400.5L253.6 398.7L243.8 394.9L243.8 394.9L254.5 396.4L258.2 396.8L261.9 397L265.6 397L269.1 396.8L272.7 396.4L276.1 395.8L279.2 395.1L282.1 394.2L284.7 393.1L287.1 391.9L289.3 390.6L291.6 388.6L293.1 386.7L293.8 384.9L293.6 383.1L292.7 381.3L291 379.5L288.4 377.7L285 375.8L280.8 373.9L275.7 371.9L269.7 369.9L262.9 367.9L211.9 353.4L209.4 355.1L221.7 359.9L156 403.5ZM239.6 409L237.3 410.7L234.5 412.5L231.6 414.1L228.7 415.5L225.7 416.6L222.7 417.5L219.5 418.1L216.3 418.5L213.1 418.6L209.7 418.5L206.4 418.1L203 417.4L199.7 416.5L197.2 415.8L194.5 414.9L191.5 414L188.3 412.9L184.8 411.8L180 410.2L212.6 388.2L228 392.7L231.9 393.9L235.3 395.2L238.1 396.6L240.4 397.9L242 399.4L243 400.8L243.4 402.4L243.3 403.9L242.6 405.6L241.4 407.2ZM264.9 383L263 384.5L260.5 386.1L258 387.5L255.5 388.6L252.9 389.5L250.3 390.2L247.6 390.7L244.9 390.9L242.1 390.9L239.2 390.7L236.3 390.3L233.3 389.7L230.4 389L217.1 385.1L244.2 366.8L256.7 370.3L259.7 371.2L262.3 372.2L264.4 373.2L266.1 374.3L267.4 375.4L268.1 376.5L268.4 377.7L268.2 378.9L267.5 380.2L266.5 381.6Z" clip-path="url(#cf0)" fill="none" stroke="#1c3a6a" stroke-opacity="0.6" stroke-width="1.5"/>
<path d="M373.1 452.4L374.9 450.9L376.5 449.2L377.9 447.6L379 445.9L379.9 444.1L380.6 442.4L381 440.6L381.1 438.8L381 437L380.6 435.2L380.1 433.5L379.2 431.7L378.1 430L376.8 428.4L375.3 426.7L373.6 425.2L371.6 423.6L369.5 422.2L367.1 420.8L364.6 419.5L361.9 418.3L359.1 417.1L356.1 416L353 415.1L349.7 414.2L346.4 413.4L342.9 412.8L339.4 412.2L335.8 411.7L332.2 411.4L328.5 411.1L324.8 411L321.1 411L317.4 411.1L313.7 411.3L310.1 411.6L306.5 412L303 412.6L299.6 413.2L296.3 413.9L293 414.8L289.9 415.7L287 416.7L284.1 417.9L281.5 419.1L279 420.3L276.7 421.7L274.5 423.1L272.6 424.6L270.9 426.2L269.4 427.8L268.1 429.5L267.1 431.2L266.3 432.9L265.7 434.6L265.4 436.4L265.3 438.2L265.5 440L265.9 441.8L266.6 443.5L267.5 445.3L268.7 447L270.1 448.7L271.7 450.3L273.6 451.9L275.7 453.4L278 454.9L280.4 456.3L283.1 457.6L286 458.8L289 460L292.2 461L295.6 462L299 462.8L302.6 463.6L306.3 464.2L310 464.7L313.8 465.1L317.6 465.3L321.5 465.5L325.4 465.5L329.2 465.4L333.1 465.2L336.9 464.8L340.6 464.4L344.3 463.8L347.8 463.1L351.3 462.3L354.6 461.4L357.8 460.4L360.8 459.2L363.6 458L366.3 456.8L368.8 455.4L371 453.9ZM344.3 445.6L342.5 446.8L340.7 447.9L338.8 449.1L336.8 450.1L334.7 451.1L332.6 452.1L330.5 453L328.3 453.8L326.1 454.6L323.9 455.3L321.7 455.9L319.4 456.4L317.2 456.9L315 457.2L312.9 457.5L310.8 457.7L308.7 457.8L306.7 457.8L304.8 457.8L303 457.6L301.2 457.4L299.6 457.1L298 456.6L296.6 456.1L295.3 455.6L294.1 454.9L293 454.2L292.1 453.4L291.3 452.5L290.6 451.6L290.1 450.6L289.7 449.6L289.5 448.5L289.4 447.3L289.5 446.2L289.7 444.9L290 443.7L290.5 442.4L291.1 441.2L291.9 439.9L292.8 438.6L293.8 437.3L295 436L296.3 434.7L297.6 433.4L299.1 432.2L300.7 430.9L302.4 429.7L304.2 428.6L306 427.4L307.9 426.4L309.9 425.4L311.9 424.4L314 423.5L316.1 422.6L318.2 421.8L320.4 421.1L322.5 420.5L324.7 419.9L326.8 419.4L329 419L331.1 418.6L333.2 418.3L335.2 418.2L337.2 418.1L339.1 418L341 418.1L342.7 418.2L344.4 418.5L346 418.8L347.6 419.2L349 419.6L350.3 420.2L351.5 420.8L352.5 421.5L353.5 422.2L354.3 423.1L355 423.9L355.6 424.9L356 425.9L356.3 426.9L356.4 428L356.4 429.2L356.3 430.3L356 431.6L355.6 432.8L355 434.1L354.4 435.3L353.5 436.6L352.6 437.9L351.5 439.2L350.3 440.5L348.9 441.8L347.5 443.1L345.9 444.4Z" fill="#687db2" fill-opacity="0.72" fill-rule="nonzero"/>
<clipPath id="cf1"><path d="M373.1 452.4L374.9 450.9L376.5 449.2L377.9 447.6L379 445.9L379.9 444.1L380.6 442.4L381 440.6L381.1 438.8L381 437L380.6 435.2L380.1 433.5L379.2 431.7L378.1 430L376.8 428.4L375.3 426.7L373.6 425.2L371.6 423.6L369.5 422.2L367.1 420.8L364.6 419.5L361.9 418.3L359.1 417.1L356.1 416L353 415.1L349.7 414.2L346.4 413.4L342.9 412.8L339.4 412.2L335.8 411.7L332.2 411.4L328.5 411.1L324.8 411L321.1 411L317.4 411.1L313.7 411.3L310.1 411.6L306.5 412L303 412.6L299.6 413.2L296.3 413.9L293 414.8L289.9 415.7L287 416.7L284.1 417.9L281.5 419.1L279 420.3L276.7 421.7L274.5 423.1L272.6 424.6L270.9 426.2L269.4 427.8L268.1 429.5L267.1 431.2L266.3 432.9L265.7 434.6L265.4 436.4L265.3 438.2L265.5 440L265.9 441.8L266.6 443.5L267.5 445.3L268.7 447L270.1 448.7L271.7 450.3L273.6 451.9L275.7 453.4L278 454.9L280.4 456.3L283.1 457.6L286 458.8L289 460L292.2 461L295.6 462L299 462.8L302.6 463.6L306.3 464.2L310 464.7L313.8 465.1L317.6 465.3L321.5 465.5L325.4 465.5L329.2 465.4L333.1 465.2L336.9 464.8L340.6 464.4L344.3 463.8L347.8 463.1L351.3 462.3L354.6 461.4L357.8 460.4L360.8 459.2L363.6 458L366.3 456.8L368.8 455.4L371 453.9ZM344.3 445.6L342.5 446.8L340.7 447.9L338.8 449.1L336.8 450.1L334.7 451.1L332.6 452.1L330.5 453L328.3 453.8L326.1 454.6L323.9 455.3L321.7 455.9L319.4 456.4L317.2 456.9L315 457.2L312.9 457.5L310.8 457.7L308.7 457.8L306.7 457.8L304.8 457.8L303 457.6L301.2 457.4L299.6 457.1L298 456.6L296.6 456.1L295.3 455.6L294.1 454.9L293 454.2L292.1 453.4L291.3 452.5L290.6 451.6L290.1 450.6L289.7 449.6L289.5 448.5L289.4 447.3L289.5 446.2L289.7 444.9L290 443.7L290.5 442.4L291.1 441.2L291.9 439.9L292.8 438.6L293.8 437.3L295 436L296.3 434.7L297.6 433.4L299.1 432.2L300.7 430.9L302.4 429.7L304.2 428.6L306 427.4L307.9 426.4L309.9 425.4L311.9 424.4L314 423.5L316.1 422.6L318.2 421.8L320.4 421.1L322.5 420.5L324.7 419.9L326.8 419.4L329 419L331.1 418.6L333.2 418.3L335.2 418.2L337.2 418.1L339.1 418L341 418.1L342.7 418.2L344.4 418.5L346 418.8L347.6 419.2L349 419.6L350.3 420.2L351.5 420.8L352.5 421.5L353.5 422.2L354.3 423.1L355 423.9L355.6 424.9L356 425.9L356.3 426.9L356.4 428L356.4 429.2L356.3 430.3L356 431.6L355.6 432.8L355 434.1L354.4 435.3L353.5 436.6L352.6 437.9L351.5 439.2L350.3 440.5L348.9 441.8L347.5 443.1L345.9 444.4Z"/></clipPath>
<path d="M373.3 445.1L375.1 443.5L376.7 441.9L378.1 440.3L379.2 438.6L380.1 436.8L380.8 435.1L381.2 433.3L381.3 431.5L381.2 429.8L380.9 428L380.3 426.2L379.4 424.5L378.3 422.8L377 421.2L375.5 419.5L373.8 418L371.8 416.5L369.7 415L367.3 413.6L364.8 412.3L362.1 411.1L359.2 409.9L356.3 408.9L353.1 407.9L349.9 407.1L346.5 406.3L343.1 405.6L339.5 405.1L335.9 404.6L332.3 404.2L328.6 404L324.9 403.9L321.2 403.9L317.5 404L313.8 404.2L310.2 404.5L306.6 404.9L303.1 405.4L299.7 406L296.3 406.8L293.1 407.6L290 408.6L287 409.6L284.2 410.7L281.5 411.9L279 413.2L276.7 414.5L274.6 416L272.6 417.4L270.9 419L269.4 420.6L268.2 422.2L267.1 423.9L266.3 425.7L265.7 427.4L265.4 429.2L265.4 430.9L265.5 432.7L266 434.5L266.6 436.2L267.5 438L268.7 439.7L270.1 441.4L271.7 443L273.6 444.6L275.7 446.1L278 447.6L280.5 449L283.2 450.3L286.1 451.5L289.1 452.6L292.3 453.7L295.6 454.6L299.1 455.5L302.7 456.2L306.3 456.8L310.1 457.3L313.9 457.7L317.7 457.9L321.6 458.1L325.5 458.1L329.4 458L333.2 457.8L337 457.4L340.8 457L344.4 456.4L348 455.7L351.4 454.9L354.8 454L357.9 453L361 451.9L363.8 450.7L366.5 449.4L369 448.1L371.2 446.6ZM344.4 438.3L342.7 439.5L340.8 440.6L338.9 441.7L336.9 442.8L334.9 443.8L332.8 444.8L330.6 445.7L328.4 446.5L326.2 447.3L324 447.9L321.8 448.5L319.5 449.1L317.3 449.5L315.1 449.9L313 450.2L310.9 450.4L308.8 450.5L306.8 450.5L304.9 450.4L303.1 450.3L301.3 450L299.7 449.7L298.1 449.3L296.7 448.8L295.4 448.2L294.2 447.6L293.1 446.9L292.1 446.1L291.3 445.2L290.7 444.3L290.2 443.3L289.8 442.3L289.5 441.2L289.5 440L289.5 438.9L289.7 437.7L290.1 436.4L290.6 435.2L291.2 433.9L292 432.6L292.9 431.3L293.9 430L295.1 428.7L296.3 427.4L297.7 426.2L299.2 424.9L300.8 423.7L302.5 422.5L304.2 421.4L306.1 420.2L308 419.2L310 418.2L312 417.2L314.1 416.3L316.2 415.4L318.3 414.6L320.5 413.9L322.6 413.3L324.8 412.7L327 412.2L329.1 411.8L331.2 411.4L333.3 411.2L335.3 411L337.3 410.9L339.2 410.9L341.1 410.9L342.9 411.1L344.6 411.3L346.2 411.6L347.7 412L349.1 412.5L350.4 413L351.6 413.6L352.7 414.3L353.7 415L354.5 415.9L355.2 416.7L355.7 417.7L356.2 418.7L356.5 419.7L356.6 420.8L356.6 422L356.5 423.1L356.2 424.3L355.8 425.6L355.2 426.8L354.5 428.1L353.7 429.4L352.7 430.7L351.6 432L350.4 433.3L349.1 434.6L347.6 435.8L346.1 437.1Z" clip-path="url(#cf1)" fill="none" stroke="#1c3a6a" stroke-opacity="0.6" stroke-width="1.5"/>
<path d="M456.1 488.9L457.8 487.2L459 485.5L459.7 483.7L460 482L459.7 480.2L458.9 478.4L457.6 476.6L455.6 474.6L453 472.6L449.7 470.4L445.8 468.2L441.2 465.8L437 463.7L433.3 461.8L430.1 460.1L427.6 458.5L425.6 457.1L424.1 455.9L423.2 454.8L422.6 453.7L422.3 452.6L422.5 451.6L423.1 450.6L424 449.6L425.2 448.8L426.6 448.1L428.2 447.5L429.9 447.1L431.8 446.8L433.9 446.7L436.2 446.7L438.5 446.9L441 447.2L443.6 447.7L446.3 448.3L449.2 449.1L451.1 449.7L453 450.4L454.9 451.1L456.7 451.8L458.5 452.7L460.3 453.6L462 454.5L463.6 455.4L464.9 456.3L466.1 457.2L467 458L468 459.1L465.9 465.1L471 466.6L482.6 456.6L477.7 454.8L471.9 452.6L466.6 450.7L461.6 449L457 447.6L452.9 446.3L447.2 444.8L441.7 443.6L436.3 442.6L431.1 442L426 441.7L421.1 441.6L416.5 441.8L412.3 442.3L408.6 443.1L405.3 444.2L402.4 445.6L399.9 447.3L398.1 449L396.7 450.7L395.9 452.4L395.5 454.1L395.6 455.9L396.1 457.7L397.2 459.5L399 461.4L401.4 463.5L404.5 465.6L408.3 467.9L412.8 470.2L417.1 472.5L420.9 474.5L424.1 476.3L426.7 477.9L428.7 479.3L430.1 480.5L431.1 481.7L431.6 482.8L431.8 483.9L431.6 485.1L431 486.1L429.9 487.2L428.6 488.1L426.9 489L425 489.7L422.8 490.2L420.5 490.5L417.9 490.7L415.1 490.7L412.1 490.5L409 490.1L405.8 489.5L402.4 488.7L398.9 487.7L396.5 486.9L394.2 486.1L392 485.2L389.9 484.2L387.8 483.2L385.9 482.1L384.2 481L382.6 479.9L381.2 478.9L380 477.8L379 476.7L378 475.5L381.1 468.2L376.1 466.7L362.5 477.6L363.2 478L365.1 478.9L367.3 480L369.8 481.1L372.6 482.3L375.7 483.7L379 485L382.2 486.2L385.3 487.4L388.4 488.5L391.5 489.5L394.5 490.5L401.6 492.5L408.4 494.1L414.9 495.4L421 496.2L426.7 496.6L432.1 496.7L437.1 496.4L441.6 495.7L445.8 494.6L449.6 493.1L453 491.2Z" fill="#687db2" fill-opacity="0.72" fill-rule="nonzero"/>
<clipPath id="cf2"><path d="M456.1 488.9L457.8 487.2L459 485.5L459.7 483.7L460 482L459.7 480.2L458.9 478.4L457.6 476.6L455.6 474.6L453 472.6L449.7 470.4L445.8 468.2L441.2 465.8L437 463.7L433.3 461.8L430.1 460.1L427.6 458.5L425.6 457.1L424.1 455.9L423.2 454.8L422.6 453.7L422.3 452.6L422.5 451.6L423.1 450.6L424 449.6L425.2 448.8L426.6 448.1L428.2 447.5L429.9 447.1L431.8 446.8L433.9 446.7L436.2 446.7L438.5 446.9L441 447.2L443.6 447.7L446.3 448.3L449.2 449.1L451.1 449.7L453 450.4L454.9 451.1L456.7 451.8L458.5 452.7L460.3 453.6L462 454.5L463.6 455.4L464.9 456.3L466.1 457.2L467 458L468 459.1L465.9 465.1L471 466.6L482.6 456.6L477.7 454.8L471.9 452.6L466.6 450.7L461.6 449L457 447.6L452.9 446.3L447.2 444.8L441.7 443.6L436.3 442.6L431.1 442L426 441.7L421.1 441.6L416.5 441.8L412.3 442.3L408.6 443.1L405.3 444.2L402.4 445.6L399.9 447.3L398.1 449L396.7 450.7L395.9 452.4L395.5 454.1L395.6 455.9L396.1 457.7L397.2 459.5L399 461.4L401.4 463.5L404.5 465.6L408.3 467.9L412.8 470.2L417.1 472.5L420.9 474.5L424.1 476.3L426.7 477.9L428.7 479.3L430.1 480.5L431.1 481.7L431.6 482.8L431.8 483.9L431.6 485.1L431 486.1L429.9 487.2L428.6 488.1L426.9 489L425 489.7L422.8 490.2L420.5 490.5L417.9 490.7L415.1 490.7L412.1 490.5L409 490.1L405.8 489.5L402.4 488.7L398.9 487.7L396.5 486.9L394.2 486.1L392 485.2L389.9 484.2L387.8 483.2L385.9 482.1L384.2 481L382.6 479.9L381.2 478.9L380 477.8L379 476.7L378 475.5L381.1 468.2L376.1 466.7L362.5 477.6L363.2 478L365.1 478.9L367.3 480L369.8 481.1L372.6 482.3L375.7 483.7L379 485L382.2 486.2L385.3 487.4L388.4 488.5L391.5 489.5L394.5 490.5L401.6 492.5L408.4 494.1L414.9 495.4L421 496.2L426.7 496.6L432.1 496.7L437.1 496.4L441.6 495.7L445.8 494.6L449.6 493.1L453 491.2Z"/></clipPath>
<path d="M456.4 481.4L458.2 479.7L459.4 478L460.1 476.3L460.3 474.5L460 472.8L459.3 471L457.9 469.2L456 467.2L453.3 465.2L450.1 463L446.1 460.8L441.6 458.4L437.3 456.3L433.6 454.4L430.4 452.7L427.9 451.2L425.8 449.8L424.4 448.6L423.4 447.5L422.8 446.4L422.6 445.3L422.8 444.3L423.4 443.3L424.3 442.3L425.5 441.5L426.9 440.8L428.4 440.2L430.2 439.8L432.1 439.5L434.2 439.4L436.5 439.4L438.8 439.6L441.3 439.9L443.9 440.4L446.6 441L449.5 441.8L451.4 442.4L453.3 443.1L455.2 443.8L457 444.5L458.9 445.3L460.7 446.2L462.4 447.1L463.9 448L465.2 448.9L466.4 449.8L467.4 450.7L468.3 451.8L466.2 457.7L471.4 459.2L483 449.3L478.1 447.4L472.3 445.3L466.9 443.4L461.9 441.7L457.4 440.3L453.2 439L447.5 437.5L442 436.3L436.6 435.4L431.4 434.7L426.3 434.4L421.4 434.3L416.7 434.6L412.6 435.1L408.8 435.9L405.6 436.9L402.7 438.3L400.1 440L398.3 441.7L397 443.4L396.1 445.1L395.7 446.8L395.8 448.5L396.4 450.3L397.5 452.1L399.2 454.1L401.7 456.1L404.8 458.3L408.5 460.5L413 462.8L417.4 465L421.2 467.1L424.4 468.9L427 470.5L429 471.9L430.4 473.1L431.4 474.2L431.9 475.4L432.1 476.5L431.9 477.6L431.3 478.7L430.2 479.7L428.9 480.7L427.2 481.5L425.3 482.2L423.1 482.7L420.7 483L418.1 483.2L415.3 483.2L412.4 483L409.3 482.6L406 482L402.7 481.2L399.1 480.2L396.7 479.4L394.4 478.6L392.2 477.7L390.1 476.7L388.1 475.7L386.2 474.7L384.4 473.6L382.8 472.5L381.4 471.4L380.2 470.4L379.2 469.3L378.2 468L381.4 460.8L376.3 459.3L362.7 470.2L363.4 470.5L365.3 471.5L367.5 472.5L370 473.7L372.8 474.9L375.9 476.2L379.2 477.5L382.4 478.8L385.5 479.9L388.7 481L391.7 482.1L394.7 483L401.9 485L408.7 486.6L415.1 487.9L421.2 488.7L427 489.1L432.4 489.2L437.4 488.9L442 488.1L446.1 487.1L449.9 485.6L453.4 483.7Z" clip-path="url(#cf2)" fill="none" stroke="#1c3a6a" stroke-opacity="0.6" stroke-width="1.5"/>
<path d="M548.4 533.4L551 530.8L549 530.5L544.2 529.6L539.2 528.5L534 527.2L528.7 525.8L523.3 524.1L518.1 522.4L513.6 520.5L510 518.5L507.1 516.4L505 514.1L503.7 511.7L503.2 509.2L503.6 506.6L504.8 503.7L506.7 500.7L509.4 497.5L512.9 494.2L515.2 492.2L517.5 490.4L519.9 488.7L522.4 487.2L525 485.8L527.7 484.6L530.3 483.5L533.1 482.5L535.8 481.7L538.6 481.1L541.5 480.6L544.3 480.3L547.2 480.1L550 480.1L552.8 480.2L555.5 480.5L558.1 481L560.7 481.7L562.8 482.3L564.7 482.9L566.4 483.5L568 484.1L569.4 484.7L570.7 485.3L571.9 485.9L573 486.6L574.1 487.3L575.2 488L576.2 488.8L577.5 489.9L573.7 499.4L579 500.9L592.1 488.3L587.7 486.5L582 484.3L576.4 482.3L570.9 480.4L565.5 478.6L560.2 477L555 475.6L549.8 474.4L544.8 473.5L539.8 472.7L534.8 472.2L530 471.9L525.2 471.8L520.5 471.9L516.1 472.3L511.7 472.9L507.5 473.7L503.4 474.7L499.5 475.9L495.8 477.4L492.2 479.1L488.9 481L485.7 483.2L482.7 485.6L478.7 489.6L475.8 493.5L474.1 497.3L473.5 501L474.1 504.5L475.9 508L478.8 511.3L482.9 514.6L488.3 517.8L494.9 521L502.8 524.1L511.9 527.1L515.2 528.1L518.5 529L521.8 529.8L525.2 530.6L528.6 531.3L532.1 531.9L535.5 532.4L538.6 532.8L541.6 533.1L544.4 533.3L547 533.4Z" fill="#687db2" fill-opacity="0.72" fill-rule="nonzero"/>
<clipPath id="cf3"><path d="M548.4 533.4L551 530.8L549 530.5L544.2 529.6L539.2 528.5L534 527.2L528.7 525.8L523.3 524.1L518.1 522.4L513.6 520.5L510 518.5L507.1 516.4L505 514.1L503.7 511.7L503.2 509.2L503.6 506.6L504.8 503.7L506.7 500.7L509.4 497.5L512.9 494.2L515.2 492.2L517.5 490.4L519.9 488.7L522.4 487.2L525 485.8L527.7 484.6L530.3 483.5L533.1 482.5L535.8 481.7L538.6 481.1L541.5 480.6L544.3 480.3L547.2 480.1L550 480.1L552.8 480.2L555.5 480.5L558.1 481L560.7 481.7L562.8 482.3L564.7 482.9L566.4 483.5L568 484.1L569.4 484.7L570.7 485.3L571.9 485.9L573 486.6L574.1 487.3L575.2 488L576.2 488.8L577.5 489.9L573.7 499.4L579 500.9L592.1 488.3L587.7 486.5L582 484.3L576.4 482.3L570.9 480.4L565.5 478.6L560.2 477L555 475.6L549.8 474.4L544.8 473.5L539.8 472.7L534.8 472.2L530 471.9L525.2 471.8L520.5 471.9L516.1 472.3L511.7 472.9L507.5 473.7L503.4 474.7L499.5 475.9L495.8 477.4L492.2 479.1L488.9 481L485.7 483.2L482.7 485.6L478.7 489.6L475.8 493.5L474.1 497.3L473.5 501L474.1 504.5L475.9 508L478.8 511.3L482.9 514.6L488.3 517.8L494.9 521L502.8 524.1L511.9 527.1L515.2 528.1L518.5 529L521.8 529.8L525.2 530.6L528.6 531.3L532.1 531.9L535.5 532.4L538.6 532.8L541.6 533.1L544.4 533.3L547 533.4Z"/></clipPath>
<path d="M548.9 525.7L551.5 523.2L549.5 522.9L544.7 521.9L539.7 520.8L534.5 519.5L529.2 518.1L523.7 516.5L518.6 514.8L514.1 512.9L510.4 510.9L507.5 508.8L505.4 506.5L504.1 504.2L503.7 501.7L504.1 499L505.2 496.2L507.2 493.2L509.9 490L513.3 486.7L515.6 484.7L518 482.9L520.4 481.2L522.9 479.7L525.5 478.3L528.1 477.1L530.8 476L533.5 475.1L536.3 474.3L539.1 473.6L542 473.2L544.8 472.8L547.7 472.7L550.5 472.6L553.3 472.8L556 473.1L558.7 473.6L561.2 474.2L563.3 474.8L565.2 475.5L566.9 476.1L568.5 476.7L570 477.2L571.3 477.8L572.5 478.4L573.6 479.1L574.7 479.8L575.7 480.5L576.7 481.3L578 482.4L574.3 491.8L579.5 493.4L592.7 480.9L588.3 479.1L582.6 476.9L577 474.8L571.5 472.9L566 471.2L560.7 469.6L555.5 468.2L550.3 467L545.3 466L540.3 465.3L535.3 464.8L530.4 464.5L525.6 464.4L521 464.5L516.5 464.9L512.1 465.5L507.9 466.2L503.8 467.3L499.9 468.5L496.2 470L492.6 471.7L489.3 473.6L486.1 475.7L483.1 478.1L479 482.1L476.2 486L474.4 489.8L473.9 493.4L474.5 497L476.2 500.4L479.2 503.7L483.3 507L488.7 510.2L495.3 513.4L503.2 516.5L512.4 519.5L515.6 520.4L519 521.3L522.3 522.1L525.7 522.9L529.1 523.6L532.6 524.2L536 524.7L539.1 525.2L542.1 525.5L544.9 525.7L547.5 525.7Z" clip-path="url(#cf3)" fill="none" stroke="#1c3a6a" stroke-opacity="0.6" stroke-width="1.5"/>
<path d="M699.2 548.8L700.7 547L702 545.1L703 543.1L703.7 541.1L704.1 539.1L704.3 537L704.2 534.9L703.8 532.9L703.2 530.8L702.2 528.7L701.1 526.7L699.7 524.6L698 522.6L696.1 520.7L694 518.8L691.6 517L689.1 515.2L686.3 513.5L683.4 511.9L680.3 510.3L677 508.9L673.6 507.6L670 506.3L666.4 505.2L662.6 504.2L658.8 503.3L654.9 502.5L650.9 501.9L646.9 501.3L642.9 500.9L638.8 500.6L634.8 500.5L630.8 500.5L626.9 500.6L623 500.8L619.2 501.2L615.4 501.7L611.8 502.3L608.3 503L604.9 503.9L601.7 504.9L598.6 505.9L595.7 507.1L593 508.4L590.4 509.8L588.1 511.3L586 512.9L584.1 514.6L582.5 516.3L581.1 518.2L579.9 520L579.1 522L578.4 523.9L578.1 526L578 528L578.1 530.1L578.6 532.2L579.3 534.2L580.2 536.3L581.5 538.4L583 540.4L584.7 542.4L586.7 544.4L589 546.3L591.5 548.2L594.1 550L597.1 551.7L600.2 553.3L603.5 554.9L606.9 556.3L610.5 557.6L614.3 558.9L618.2 560L622.2 561L626.2 561.8L630.4 562.5L634.6 563.1L638.8 563.6L643 563.9L647.3 564.1L651.5 564.1L655.6 564L659.7 563.7L663.7 563.3L667.6 562.8L671.4 562.1L675.1 561.3L678.5 560.3L681.9 559.3L685 558.1L687.9 556.8L690.7 555.4L693.2 553.8L695.4 552.2L697.4 550.6ZM666 540.8L664.5 542.2L662.8 543.5L661.1 544.8L659.3 546.1L657.4 547.3L655.4 548.4L653.3 549.4L651.2 550.4L649 551.3L646.8 552.1L644.6 552.8L642.4 553.4L640.1 554L637.9 554.4L635.6 554.7L633.4 555L631.2 555.1L629.1 555.1L627 555L624.9 554.9L623 554.6L621.1 554.2L619.3 553.7L617.6 553.1L616 552.5L614.5 551.7L613.1 550.8L611.9 549.9L610.8 548.9L609.8 547.8L608.9 546.7L608.2 545.4L607.7 544.2L607.2 542.8L607 541.5L606.8 540L606.8 538.6L607 537.1L607.3 535.6L607.8 534.1L608.4 532.6L609.1 531.1L610 529.6L610.9 528L612.1 526.6L613.3 525.1L614.7 523.7L616.1 522.3L617.7 520.9L619.4 519.6L621.1 518.4L622.9 517.2L624.8 516L626.8 515L628.8 514L630.9 513.1L633 512.2L635.1 511.5L637.3 510.8L639.5 510.2L641.7 509.7L643.8 509.3L646 509L648.1 508.8L650.2 508.7L652.3 508.7L654.3 508.7L656.3 508.9L658.2 509.2L660 509.5L661.8 510L663.4 510.5L665 511.1L666.5 511.9L667.8 512.7L669.1 513.5L670.2 514.5L671.2 515.5L672.1 516.6L672.9 517.8L673.5 519L674 520.3L674.3 521.6L674.5 523L674.6 524.4L674.5 525.9L674.3 527.3L673.9 528.8L673.4 530.3L672.7 531.9L671.9 533.4L671 534.9L669.9 536.4L668.8 537.9L667.5 539.4Z" fill="#687db2" fill-opacity="0.72" fill-rule="nonzero"/>
<clipPath id="cf4"><path d="M699.2 548.8L700.7 547L702 545.1L703 543.1L703.7 541.1L704.1 539.1L704.3 537L704.2 534.9L703.8 532.9L703.2 530.8L702.2 528.7L701.1 526.7L699.7 524.6L698 522.6L696.1 520.7L694 518.8L691.6 517L689.1 515.2L686.3 513.5L683.4 511.9L680.3 510.3L677 508.9L673.6 507.6L670 506.3L666.4 505.2L662.6 504.2L658.8 503.3L654.9 502.5L650.9 501.9L646.9 501.3L642.9 500.9L638.8 500.6L634.8 500.5L630.8 500.5L626.9 500.6L623 500.8L619.2 501.2L615.4 501.7L611.8 502.3L608.3 503L604.9 503.9L601.7 504.9L598.6 505.9L595.7 507.1L593 508.4L590.4 509.8L588.1 511.3L586 512.9L584.1 514.6L582.5 516.3L581.1 518.2L579.9 520L579.1 522L578.4 523.9L578.1 526L578 528L578.1 530.1L578.6 532.2L579.3 534.2L580.2 536.3L581.5 538.4L583 540.4L584.7 542.4L586.7 544.4L589 546.3L591.5 548.2L594.1 550L597.1 551.7L600.2 553.3L603.5 554.9L606.9 556.3L610.5 557.6L614.3 558.9L618.2 560L622.2 561L626.2 561.8L630.4 562.5L634.6 563.1L638.8 563.6L643 563.9L647.3 564.1L651.5 564.1L655.6 564L659.7 563.7L663.7 563.3L667.6 562.8L671.4 562.1L675.1 561.3L678.5 560.3L681.9 559.3L685 558.1L687.9 556.8L690.7 555.4L693.2 553.8L695.4 552.2L697.4 550.6ZM666 540.8L664.5 542.2L662.8 543.5L661.1 544.8L659.3 546.1L657.4 547.3L655.4 548.4L653.3 549.4L651.2 550.4L649 551.3L646.8 552.1L644.6 552.8L642.4 553.4L640.1 554L637.9 554.4L635.6 554.7L633.4 555L631.2 555.1L629.1 555.1L627 555L624.9 554.9L623 554.6L621.1 554.2L619.3 553.7L617.6 553.1L616 552.5L614.5 551.7L613.1 550.8L611.9 549.9L610.8 548.9L609.8 547.8L608.9 546.7L608.2 545.4L607.7 544.2L607.2 542.8L607 541.5L606.8 540L606.8 538.6L607 537.1L607.3 535.6L607.8 534.1L608.4 532.6L609.1 531.1L610 529.6L610.9 528L612.1 526.6L613.3 525.1L614.7 523.7L616.1 522.3L617.7 520.9L619.4 519.6L621.1 518.4L622.9 517.2L624.8 516L626.8 515L628.8 514L630.9 513.1L633 512.2L635.1 511.5L637.3 510.8L639.5 510.2L641.7 509.7L643.8 509.3L646 509L648.1 508.8L650.2 508.7L652.3 508.7L654.3 508.7L656.3 508.9L658.2 509.2L660 509.5L661.8 510L663.4 510.5L665 511.1L666.5 511.9L667.8 512.7L669.1 513.5L670.2 514.5L671.2 515.5L672.1 516.6L672.9 517.8L673.5 519L674 520.3L674.3 521.6L674.5 523L674.6 524.4L674.5 525.9L674.3 527.3L673.9 528.8L673.4 530.3L672.7 531.9L671.9 533.4L671 534.9L669.9 536.4L668.8 537.9L667.5 539.4Z"/></clipPath>
<path d="M700 541L701.5 539.2L702.8 537.3L703.8 535.4L704.5 533.4L704.9 531.4L705.1 529.3L705 527.3L704.6 525.2L704 523.1L703 521.1L701.9 519L700.4 517L698.8 515L696.9 513.1L694.7 511.2L692.4 509.4L689.8 507.6L687.1 505.9L684.1 504.3L681 502.8L677.7 501.3L674.3 500L670.8 498.8L667.1 497.7L663.3 496.6L659.5 495.7L655.6 495L651.6 494.3L647.6 493.8L643.6 493.4L639.5 493.1L635.5 492.9L631.5 492.9L627.5 493L623.6 493.3L619.8 493.6L616 494.1L612.4 494.7L608.9 495.5L605.5 496.3L602.3 497.3L599.2 498.4L596.3 499.6L593.5 500.9L591 502.3L588.7 503.8L586.6 505.3L584.7 507L583.1 508.7L581.7 510.6L580.5 512.4L579.6 514.3L579 516.3L578.6 518.3L578.5 520.4L578.7 522.4L579.1 524.5L579.8 526.6L580.8 528.6L582.1 530.7L583.6 532.7L585.3 534.7L587.3 536.7L589.6 538.6L592.1 540.4L594.8 542.2L597.7 543.9L600.8 545.6L604.1 547.1L607.6 548.5L611.2 549.9L614.9 551.1L618.8 552.2L622.8 553.2L626.9 554L631.1 554.7L635.3 555.3L639.5 555.8L643.8 556.1L648 556.2L652.2 556.3L656.4 556.2L660.5 555.9L664.5 555.5L668.4 554.9L672.2 554.3L675.8 553.5L679.3 552.5L682.6 551.5L685.8 550.3L688.7 549L691.4 547.6L693.9 546.1L696.2 544.5L698.2 542.8ZM666.8 533.1L665.2 534.5L663.6 535.8L661.8 537.1L660 538.4L658.1 539.5L656.1 540.7L654 541.7L651.9 542.7L649.7 543.5L647.5 544.4L645.3 545.1L643.1 545.7L640.8 546.2L638.5 546.6L636.3 547L634.1 547.2L631.9 547.3L629.7 547.4L627.6 547.3L625.6 547.1L623.6 546.8L621.7 546.4L619.9 546L618.2 545.4L616.6 544.7L615.2 543.9L613.8 543.1L612.5 542.2L611.4 541.2L610.4 540.1L609.6 538.9L608.9 537.7L608.3 536.4L607.9 535.1L607.6 533.7L607.5 532.3L607.5 530.9L607.6 529.4L607.9 527.9L608.4 526.4L609 524.9L609.7 523.4L610.6 521.9L611.6 520.4L612.7 518.9L613.9 517.5L615.3 516L616.8 514.7L618.3 513.3L620 512L621.7 510.8L623.6 509.6L625.5 508.4L627.5 507.4L629.5 506.4L631.5 505.5L633.7 504.6L635.8 503.9L638 503.2L640.1 502.6L642.3 502.2L644.5 501.8L646.7 501.4L648.8 501.2L650.9 501.1L653 501.1L655 501.2L657 501.3L658.9 501.6L660.7 502L662.5 502.4L664.1 502.9L665.7 503.6L667.2 504.3L668.5 505.1L669.8 506L670.9 506.9L671.9 507.9L672.8 509L673.6 510.2L674.2 511.4L674.7 512.7L675 514L675.2 515.4L675.3 516.8L675.2 518.2L675 519.7L674.6 521.2L674.1 522.7L673.5 524.2L672.7 525.7L671.7 527.2L670.7 528.7L669.5 530.2L668.2 531.7Z" clip-path="url(#cf4)" fill="none" stroke="#1c3a6a" stroke-opacity="0.6" stroke-width="1.5"/>
<path d="M140.5 407.4L137.8 409.2L158 415.3L195.3 427L202.6 429.1L209.6 430.7L216.4 432L222.9 432.9L229.1 433.3L235 433.4L240.6 433.1L245.7 432.3L250.5 431.2L254.9 429.7L259 427.8L262.7 425.5L264.9 423.6L266.5 421.8L267.5 420L267.8 418.3L267.6 416.5L266.8 414.7L265.4 412.9L263.3 411.1L260.7 409.4L257.5 407.6L253.7 405.8L243.8 402L243.9 402L254.5 403.5L258.2 403.9L261.9 404.1L265.5 404.1L269.1 403.9L272.6 403.5L276 402.9L279.1 402.2L282 401.3L284.7 400.2L287.1 399L289.2 397.6L291.6 395.7L293 393.8L293.7 391.9L293.6 390.1L292.6 388.3L290.9 386.5L288.4 384.7L285 382.8L280.7 380.9L275.6 378.9L269.7 376.9L262.9 374.9L212 360.3L209.5 362L221.8 366.8L156.2 410.6ZM239.6 416.1L237.3 417.9L234.5 419.7L231.7 421.3L228.8 422.7L225.8 423.8L222.7 424.7L219.6 425.3L216.4 425.7L213.1 425.8L209.8 425.7L206.5 425.3L203.1 424.6L199.8 423.7L197.3 423L194.6 422.1L191.6 421.2L188.4 420.1L184.9 419L180.1 417.4L212.7 395.2L228 399.7L232 401L235.3 402.3L238.1 403.6L240.4 405L242 406.5L243 408L243.4 409.5L243.3 411.1L242.6 412.7L241.4 414.4ZM264.9 390L263 391.5L260.5 393.1L258 394.5L255.5 395.7L252.9 396.6L250.3 397.3L247.6 397.8L244.9 398L242.1 398L239.2 397.8L236.3 397.4L233.4 396.8L230.4 396L217.2 392.1L244.2 373.7L256.7 377.3L259.7 378.2L262.3 379.2L264.4 380.2L266.1 381.3L267.3 382.4L268.1 383.5L268.4 384.7L268.2 385.9L267.5 387.3L266.4 388.6Z" fill="none" stroke="#3d74c4" stroke-width="6.5" stroke-linejoin="round"/>
<path d="M373.1 452.4L374.9 450.9L376.5 449.2L377.9 447.6L379 445.9L379.9 444.1L380.6 442.4L381 440.6L381.1 438.8L381 437L380.6 435.2L380.1 433.5L379.2 431.7L378.1 430L376.8 428.4L375.3 426.7L373.6 425.2L371.6 423.6L369.5 422.2L367.1 420.8L364.6 419.5L361.9 418.3L359.1 417.1L356.1 416L353 415.1L349.7 414.2L346.4 413.4L342.9 412.8L339.4 412.2L335.8 411.7L332.2 411.4L328.5 411.1L324.8 411L321.1 411L317.4 411.1L313.7 411.3L310.1 411.6L306.5 412L303 412.6L299.6 413.2L296.3 413.9L293 414.8L289.9 415.7L287 416.7L284.1 417.9L281.5 419.1L279 420.3L276.7 421.7L274.5 423.1L272.6 424.6L270.9 426.2L269.4 427.8L268.1 429.5L267.1 431.2L266.3 432.9L265.7 434.6L265.4 436.4L265.3 438.2L265.5 440L265.9 441.8L266.6 443.5L267.5 445.3L268.7 447L270.1 448.7L271.7 450.3L273.6 451.9L275.7 453.4L278 454.9L280.4 456.3L283.1 457.6L286 458.8L289 460L292.2 461L295.6 462L299 462.8L302.6 463.6L306.3 464.2L310 464.7L313.8 465.1L317.6 465.3L321.5 465.5L325.4 465.5L329.2 465.4L333.1 465.2L336.9 464.8L340.6 464.4L344.3 463.8L347.8 463.1L351.3 462.3L354.6 461.4L357.8 460.4L360.8 459.2L363.6 458L366.3 456.8L368.8 455.4L371 453.9ZM344.3 445.6L342.5 446.8L340.7 447.9L338.8 449.1L336.8 450.1L334.7 451.1L332.6 452.1L330.5 453L328.3 453.8L326.1 454.6L323.9 455.3L321.7 455.9L319.4 456.4L317.2 456.9L315 457.2L312.9 457.5L310.8 457.7L308.7 457.8L306.7 457.8L304.8 457.8L303 457.6L301.2 457.4L299.6 457.1L298 456.6L296.6 456.1L295.3 455.6L294.1 454.9L293 454.2L292.1 453.4L291.3 452.5L290.6 451.6L290.1 450.6L289.7 449.6L289.5 448.5L289.4 447.3L289.5 446.2L289.7 444.9L290 443.7L290.5 442.4L291.1 441.2L291.9 439.9L292.8 438.6L293.8 437.3L295 436L296.3 434.7L297.6 433.4L299.1 432.2L300.7 430.9L302.4 429.7L304.2 428.6L306 427.4L307.9 426.4L309.9 425.4L311.9 424.4L314 423.5L316.1 422.6L318.2 421.8L320.4 421.1L322.5 420.5L324.7 419.9L326.8 419.4L329 419L331.1 418.6L333.2 418.3L335.2 418.2L337.2 418.1L339.1 418L341 418.1L342.7 418.2L344.4 418.5L346 418.8L347.6 419.2L349 419.6L350.3 420.2L351.5 420.8L352.5 421.5L353.5 422.2L354.3 423.1L355 423.9L355.6 424.9L356 425.9L356.3 426.9L356.4 428L356.4 429.2L356.3 430.3L356 431.6L355.6 432.8L355 434.1L354.4 435.3L353.5 436.6L352.6 437.9L351.5 439.2L350.3 440.5L348.9 441.8L347.5 443.1L345.9 444.4Z" fill="none" stroke="#3d74c4" stroke-width="6.5" stroke-linejoin="round"/>
<path d="M456.1 488.9L457.8 487.2L459 485.5L459.7 483.7L460 482L459.7 480.2L458.9 478.4L457.6 476.6L455.6 474.6L453 472.6L449.7 470.4L445.8 468.2L441.2 465.8L437 463.7L433.3 461.8L430.1 460.1L427.6 458.5L425.6 457.1L424.1 455.9L423.2 454.8L422.6 453.7L422.3 452.6L422.5 451.6L423.1 450.6L424 449.6L425.2 448.8L426.6 448.1L428.2 447.5L429.9 447.1L431.8 446.8L433.9 446.7L436.2 446.7L438.5 446.9L441 447.2L443.6 447.7L446.3 448.3L449.2 449.1L451.1 449.7L453 450.4L454.9 451.1L456.7 451.8L458.5 452.7L460.3 453.6L462 454.5L463.6 455.4L464.9 456.3L466.1 457.2L467 458L468 459.1L465.9 465.1L471 466.6L482.6 456.6L477.7 454.8L471.9 452.6L466.6 450.7L461.6 449L457 447.6L452.9 446.3L447.2 444.8L441.7 443.6L436.3 442.6L431.1 442L426 441.7L421.1 441.6L416.5 441.8L412.3 442.3L408.6 443.1L405.3 444.2L402.4 445.6L399.9 447.3L398.1 449L396.7 450.7L395.9 452.4L395.5 454.1L395.6 455.9L396.1 457.7L397.2 459.5L399 461.4L401.4 463.5L404.5 465.6L408.3 467.9L412.8 470.2L417.1 472.5L420.9 474.5L424.1 476.3L426.7 477.9L428.7 479.3L430.1 480.5L431.1 481.7L431.6 482.8L431.8 483.9L431.6 485.1L431 486.1L429.9 487.2L428.6 488.1L426.9 489L425 489.7L422.8 490.2L420.5 490.5L417.9 490.7L415.1 490.7L412.1 490.5L409 490.1L405.8 489.5L402.4 488.7L398.9 487.7L396.5 486.9L394.2 486.1L392 485.2L389.9 484.2L387.8 483.2L385.9 482.1L384.2 481L382.6 479.9L381.2 478.9L380 477.8L379 476.7L378 475.5L381.1 468.2L376.1 466.7L362.5 477.6L363.2 478L365.1 478.9L367.3 480L369.8 481.1L372.6 482.3L375.7 483.7L379 485L382.2 486.2L385.3 487.4L388.4 488.5L391.5 489.5L394.5 490.5L401.6 492.5L408.4 494.1L414.9 495.4L421 496.2L426.7 496.6L432.1 496.7L437.1 496.4L441.6 495.7L445.8 494.6L449.6 493.1L453 491.2Z" fill="none" stroke="#3d74c4" stroke-width="6.5" stroke-linejoin="round"/>
<path d="M548.4 533.4L551 530.8L549 530.5L544.2 529.6L539.2 528.5L534 527.2L528.7 525.8L523.3 524.1L518.1 522.4L513.6 520.5L510 518.5L507.1 516.4L505 514.1L503.7 511.7L503.2 509.2L503.6 506.6L504.8 503.7L506.7 500.7L509.4 497.5L512.9 494.2L515.2 492.2L517.5 490.4L519.9 488.7L522.4 487.2L525 485.8L527.7 484.6L530.3 483.5L533.1 482.5L535.8 481.7L538.6 481.1L541.5 480.6L544.3 480.3L547.2 480.1L550 480.1L552.8 480.2L555.5 480.5L558.1 481L560.7 481.7L562.8 482.3L564.7 482.9L566.4 483.5L568 484.1L569.4 484.7L570.7 485.3L571.9 485.9L573 486.6L574.1 487.3L575.2 488L576.2 488.8L577.5 489.9L573.7 499.4L579 500.9L592.1 488.3L587.7 486.5L582 484.3L576.4 482.3L570.9 480.4L565.5 478.6L560.2 477L555 475.6L549.8 474.4L544.8 473.5L539.8 472.7L534.8 472.2L530 471.9L525.2 471.8L520.5 471.9L516.1 472.3L511.7 472.9L507.5 473.7L503.4 474.7L499.5 475.9L495.8 477.4L492.2 479.1L488.9 481L485.7 483.2L482.7 485.6L478.7 489.6L475.8 493.5L474.1 497.3L473.5 501L474.1 504.5L475.9 508L478.8 511.3L482.9 514.6L488.3 517.8L494.9 521L502.8 524.1L511.9 527.1L515.2 528.1L518.5 529L521.8 529.8L525.2 530.6L528.6 531.3L532.1 531.9L535.5 532.4L538.6 532.8L541.6 533.1L544.4 533.3L547 533.4Z" fill="none" stroke="#3d74c4" stroke-width="6.5" stroke-linejoin="round"/>
<path d="M699.2 548.8L700.7 547L702 545.1L703 543.1L703.7 541.1L704.1 539.1L704.3 537L704.2 534.9L703.8 532.9L703.2 530.8L702.2 528.7L701.1 526.7L699.7 524.6L698 522.6L696.1 520.7L694 518.8L691.6 517L689.1 515.2L686.3 513.5L683.4 511.9L680.3 510.3L677 508.9L673.6 507.6L670 506.3L666.4 505.2L662.6 504.2L658.8 503.3L654.9 502.5L650.9 501.9L646.9 501.3L642.9 500.9L638.8 500.6L634.8 500.5L630.8 500.5L626.9 500.6L623 500.8L619.2 501.2L615.4 501.7L611.8 502.3L608.3 503L604.9 503.9L601.7 504.9L598.6 505.9L595.7 507.1L593 508.4L590.4 509.8L588.1 511.3L586 512.9L584.1 514.6L582.5 516.3L581.1 518.2L579.9 520L579.1 522L578.4 523.9L578.1 526L578 528L578.1 530.1L578.6 532.2L579.3 534.2L580.2 536.3L581.5 538.4L583 540.4L584.7 542.4L586.7 544.4L589 546.3L591.5 548.2L594.1 550L597.1 551.7L600.2 553.3L603.5 554.9L606.9 556.3L610.5 557.6L614.3 558.9L618.2 560L622.2 561L626.2 561.8L630.4 562.5L634.6 563.1L638.8 563.6L643 563.9L647.3 564.1L651.5 564.1L655.6 564L659.7 563.7L663.7 563.3L667.6 562.8L671.4 562.1L675.1 561.3L678.5 560.3L681.9 559.3L685 558.1L687.9 556.8L690.7 555.4L693.2 553.8L695.4 552.2L697.4 550.6ZM666 540.8L664.5 542.2L662.8 543.5L661.1 544.8L659.3 546.1L657.4 547.3L655.4 548.4L653.3 549.4L651.2 550.4L649 551.3L646.8 552.1L644.6 552.8L642.4 553.4L640.1 554L637.9 554.4L635.6 554.7L633.4 555L631.2 555.1L629.1 555.1L627 555L624.9 554.9L623 554.6L621.1 554.2L619.3 553.7L617.6 553.1L616 552.5L614.5 551.7L613.1 550.8L611.9 549.9L610.8 548.9L609.8 547.8L608.9 546.7L608.2 545.4L607.7 544.2L607.2 542.8L607 541.5L606.8 540L606.8 538.6L607 537.1L607.3 535.6L607.8 534.1L608.4 532.6L609.1 531.1L610 529.6L610.9 528L612.1 526.6L613.3 525.1L614.7 523.7L616.1 522.3L617.7 520.9L619.4 519.6L621.1 518.4L622.9 517.2L624.8 516L626.8 515L628.8 514L630.9 513.1L633 512.2L635.1 511.5L637.3 510.8L639.5 510.2L641.7 509.7L643.8 509.3L646 509L648.1 508.8L650.2 508.7L652.3 508.7L654.3 508.7L656.3 508.9L658.2 509.2L660 509.5L661.8 510L663.4 510.5L665 511.1L666.5 511.9L667.8 512.7L669.1 513.5L670.2 514.5L671.2 515.5L672.1 516.6L672.9 517.8L673.5 519L674 520.3L674.3 521.6L674.5 523L674.6 524.4L674.5 525.9L674.3 527.3L673.9 528.8L673.4 530.3L672.7 531.9L671.9 533.4L671 534.9L669.9 536.4L668.8 537.9L667.5 539.4Z" fill="none" stroke="#3d74c4" stroke-width="6.5" stroke-linejoin="round"/>
<path d="M699.2 548.8L700.7 547L702 545.1L703 543.1L703.7 541.1L704.1 539.1L704.3 537L704.2 534.9L703.8 532.9L703.2 530.8L702.2 528.7L701.1 526.7L699.7 524.6L698 522.6L696.1 520.7L694 518.8L691.6 517L689.1 515.2L686.3 513.5L683.4 511.9L680.3 510.3L677 508.9L673.6 507.6L670 506.3L666.4 505.2L662.6 504.2L658.8 503.3L654.9 502.5L650.9 501.9L646.9 501.3L642.9 500.9L638.8 500.6L634.8 500.5L630.8 500.5L626.9 500.6L623 500.8L619.2 501.2L615.4 501.7L611.8 502.3L608.3 503L604.9 503.9L601.7 504.9L598.6 505.9L595.7 507.1L593 508.4L590.4 509.8L588.1 511.3L586 512.9L584.1 514.6L582.5 516.3L581.1 518.2L579.9 520L579.1 522L578.4 523.9L578.1 526L578 528L578.1 530.1L578.6 532.2L579.3 534.2L580.2 536.3L581.5 538.4L583 540.4L584.7 542.4L586.7 544.4L589 546.3L591.5 548.2L594.1 550L597.1 551.7L600.2 553.3L603.5 554.9L606.9 556.3L610.5 557.6L614.3 558.9L618.2 560L622.2 561L626.2 561.8L630.4 562.5L634.6 563.1L638.8 563.6L643 563.9L647.3 564.1L651.5 564.1L655.6 564L659.7 563.7L663.7 563.3L667.6 562.8L671.4 562.1L675.1 561.3L678.5 560.3L681.9 559.3L685 558.1L687.9 556.8L690.7 555.4L693.2 553.8L695.4 552.2L697.4 550.6ZM666 540.8L664.5 542.2L662.8 543.5L661.1 544.8L659.3 546.1L657.4 547.3L655.4 548.4L653.3 549.4L651.2 550.4L649 551.3L646.8 552.1L644.6 552.8L642.4 553.4L640.1 554L637.9 554.4L635.6 554.7L633.4 555L631.2 555.1L629.1 555.1L627 555L624.9 554.9L623 554.6L621.1 554.2L619.3 553.7L617.6 553.1L616 552.5L614.5 551.7L613.1 550.8L611.9 549.9L610.8 548.9L609.8 547.8L608.9 546.7L608.2 545.4L607.7 544.2L607.2 542.8L607 541.5L606.8 540L606.8 538.6L607 537.1L607.3 535.6L607.8 534.1L608.4 532.6L609.1 531.1L610 529.6L610.9 528L612.1 526.6L613.3 525.1L614.7 523.7L616.1 522.3L617.7 520.9L619.4 519.6L621.1 518.4L622.9 517.2L624.8 516L626.8 515L628.8 514L630.9 513.1L633 512.2L635.1 511.5L637.3 510.8L639.5 510.2L641.7 509.7L643.8 509.3L646 509L648.1 508.8L650.2 508.7L652.3 508.7L654.3 508.7L656.3 508.9L658.2 509.2L660 509.5L661.8 510L663.4 510.5L665 511.1L666.5 511.9L667.8 512.7L669.1 513.5L670.2 514.5L671.2 515.5L672.1 516.6L672.9 517.8L673.5 519L674 520.3L674.3 521.6L674.5 523L674.6 524.4L674.5 525.9L674.3 527.3L673.9 528.8L673.4 530.3L672.7 531.9L671.9 533.4L671 534.9L669.9 536.4L668.8 537.9L667.5 539.4Z" fill="none" stroke="#e4eeff" stroke-width="1.7" stroke-dasharray="16 2.5"/>
<path d="M12.2,495.1 8.5,430 216.8,300 858.2,472.8 849,539.5 698.5,727.5 12.2,495.1 M8.5,430 706.4,654 858.2,472.8 M706.4,654 698.5,727.5" fill="none" stroke="#111" stroke-width="1.6" stroke-linejoin="round"/>
<g fill="none">
<path d="M426.5 437.5 L426.5 397" stroke="#1010ff" stroke-width="2.2"/><path d="M423.3 398.5 L426.8 388.5 L430.3 398.5Z" fill="#1010ff" stroke="#1010ff" stroke-width="0.8"/>
<path d="M427 437 L446 423" stroke="#10ee10" stroke-width="2.2"/><path d="M442.3 419.6 L452.3 416.6 L447.3 425.6Z" fill="#10ee10" stroke="#10ee10" stroke-width="0.8"/>
<path d="M427 437.5 L465 449" stroke="#ff1010" stroke-width="2.2"/><path d="M465.5 445 L474.5 451 L463.5 454.5Z" fill="#ff1010" stroke="#ff1010" stroke-width="0.8"/>
</g>
<g font-family="Liberation Sans" font-size="12">
<text x="424.5" y="378" fill="#4a4ad8">Z</text><text x="455.5" y="414.5" fill="#44dd44">Y</text><text x="486.5" y="460.5" fill="#ff5050">X</text>
</g>
<g>
<polygon points="934,14 988,36 1010,10 1006,-6 936,-6" fill="#000" opacity="0.13" filter="url(#blur6)"/>
<defs><linearGradient id="cubef" x1="0" y1="0" x2="0" y2="1"><stop offset="0" stop-color="#e2e2e2"/><stop offset="1" stop-color="#d6d6d6"/></linearGradient></defs>
<polygon points="940,0 940,12.8 980.3,26.7 980.3,0" fill="url(#cubef)"/>
<polygon points="980.3,0 980.3,26.7 1002.7,4.6 1002.7,0" fill="#d2d2d2"/>
<path d="M980.3 0 L980.3 26.7" stroke="#777" stroke-width="1" stroke-dasharray="4 2.5"/>
<path d="M980.3 26.7 L1002.7 4.6" stroke="#888" stroke-width="0.9" stroke-dasharray="3 2"/>
<path d="M1002.7 0 L1002.7 4.6" stroke="#999" stroke-width="0.9"/>
<path d="M940 12.8 L987.6 30.9" stroke="#e89090" stroke-width="2.2"/>
<path d="M940 0 L940 12.8" stroke="#4040ee" stroke-width="1.6"/>
<path d="M991.8 28.6 L997.6 38.6 M997.6 28.6 L991.8 38.6" stroke="#ff8a8a" stroke-width="1.9"/>
<g transform="translate(951 5.6) skewY(5)"><text x="0" y="0" font-family="Liberation Sans" font-weight="bold" font-size="11.5" fill="#999" textLength="25" lengthAdjust="spacingAndGlyphs">ONT</text></g>
<path d="M985.5 3.5 L988 0 M990 0 L989 2" stroke="#9a9a9a" stroke-width="1.2"/>
</g>
</svg></div>
<div id="panel">
  <div class="abs hdr">
    <div class="abs minus"></div>
    <div class="abs title">2D POCKET : 2D POCKET1</div>
    <svg class="abs" style="left:234px;top:10px" width="11" height="7"><path d="M0 0 L5 3.2 L0 6.4Z M5 0 L10 3.2 L5 6.4Z" fill="#222"/></svg>
  </div>
  <div class="abs tabs">
    <div class="abs tab-act"></div>
    <div class="abs sep" style="left:85px"></div>
    <div class="abs sep" style="left:114px"></div>
    <div class="abs sep" style="left:143px"></div>
    <div class="abs sep" style="left:172px"></div>
    <svg class="abs" style="left:0;top:0" width="248" height="27">
      <defs>
        <linearGradient id="tg1" x1="0" y1="0" x2="0" y2="1"><stop offset="0" stop-color="#ffffff"/><stop offset="1" stop-color="#c8c8c8"/></linearGradient>
        <linearGradient id="tg2" x1="0" y1="0" x2="0" y2="1"><stop offset="0" stop-color="#f6f7f9"/><stop offset="1" stop-color="#d5dae0"/></linearGradient>
      </defs>
      <!-- tool -->
      <rect x="9.3" y="8.6" width="10.4" height="5.6" rx="2.6" fill="url(#tg1)" stroke="#555" stroke-width="0.9"/>
      <path d="M11.3 14.2 L11.3 21.5 Q14.7 24.6 18.1 21.5 L18.1 14.2Z" fill="#f4f4f4" stroke="#333" stroke-width="1"/>
      <path d="M11.5 20.5 L17.8 15.5 M11.6 23 L17.9 18" stroke="#222" stroke-width="1.5"/>
      <!-- tab2 -->
      <path d="M34.4 12.8 L38.6 8.6 L48 8.6 L48 17.6 L43.4 22.4 L34.4 22.4Z" fill="url(#tg2)" stroke="#2a2f36" stroke-width="1.1" stroke-linejoin="round"/>
      <path d="M43.4 13.2 L48 8.6 L48 17.6 L43.4 22.4Z" fill="#b9c0ca"/>
      <path d="M34.4 12.8 L43.4 12.8 M43.4 12.8 L43.4 22.4" stroke="#2a2f36" stroke-width="0.6" fill="none"/>
      <path d="M38.6 12.8 L41.2 7.4 L48.2 7.4 L48.2 14.6 L45.3 17.6 L45.3 12.8 Z" fill="#a9d4ea" stroke="#1a6cc8" stroke-width="1.1" stroke-linejoin="round"/>
      <!-- tab3 -->
      <path d="M63.4 14 L67.6 9.8 L77 9.8 L77 17.6 L72.4 22.4 L63.4 22.4Z" fill="url(#tg2)" stroke="#2a2f36" stroke-width="1.1" stroke-linejoin="round"/>
      <path d="M72.4 14 L77 9.8 L77 17.6 L72.4 22.4Z" fill="#b9c0ca"/>
      <path d="M63 12.6 L67.8 7.2 L78.2 7.2 L73.4 12.6Z" fill="#f0a010" stroke="#e08800" stroke-width="0.6"/>
      <!-- tab4 pocket -->
      <path d="M92.5 7.5 L92.5 22.5 L108 22.5 L108 7.5" fill="none" stroke="#2e3338" stroke-width="1.4"/>
      <path d="M95 19.5 L105.5 19.5" stroke="#2e3338" stroke-width="1.3"/>
      <rect x="95.6" y="12.4" width="9.4" height="2.2" fill="#5aa0e0"/><rect x="95.6" y="15.4" width="9.4" height="2.2" fill="#5aa0e0"/>
      <!-- tab5 axes -->
      <path d="M123.5 22 L123.5 10 M123.5 22 L135 22" stroke="#1b7fae" stroke-width="1.5"/>
      <path d="M120.6 11 L123.5 6.8 L126.4 11Z M134 19.1 L138.2 22 L134 24.9Z" fill="#1b7fae"/>
      <circle cx="123.5" cy="21.5" r="2.6" fill="#1d5a7a"/>
      <path d="M127 18.5 L135.5 10" stroke="#3a3a3a" stroke-width="3"/><path d="M127.8 17.7 L134.8 10.7" stroke="#f6e7b0" stroke-width="1.4"/>
      <!-- tab6 -->
      <path d="M152.2 15.5 L152.2 8.3 L167.6 8.3 L167.6 15.5" fill="none" stroke="#e8dc00" stroke-width="1.7"/>
      <path d="M151.4 15.2 L168.4 15.2" stroke="#37a845" stroke-width="1.6"/>
      <path d="M152.2 23 L152.2 18.8 L157.3 18.8 L157.3 13.8 L162.5 13.8 L162.5 18.8 L167.6 18.8 L167.6 23Z" fill="none" stroke="#2e3338" stroke-width="1.3"/>
    </svg>
  </div>
  <svg class="abs" style="left:9px;top:65px" width="9" height="7"><path d="M0 0 L9 0 L4.5 6Z" fill="#333"/></svg>
  <div class="abs sec" style="left:24px;top:62px">Geometry</div>
  <div class="abs" style="left:12px;top:92px;white-space:nowrap;color:#333">Pocket Selections</div>
  <div class="abs" style="left:112px;top:84px;width:59px;height:27px;background:#0696d7;border-radius:2px;"></div>
  <svg class="abs" style="left:119px;top:90px" width="12" height="17"><path d="M1.5 1 L1.5 13 L4.5 10.5 L7 15.5 L8.8 14.6 L6.4 9.8 L10.5 9.6Z" fill="#4a4a4a" stroke="#f2f2f2" stroke-width="0.9"/></svg>
  <div class="abs" style="left:134px;top:92px;color:#fff;font-size:11px;">Select</div>
  <svg class="abs" style="left:182px;top:94px" width="9" height="9"><path d="M1 1 L8 8 M8 1 L1 8" stroke="#444" stroke-width="1.8"/></svg>
  <div class="abs lst">
    <div class="abs" style="left:201px;top:1px;width:5px;height:94px;background:#9c9c9c;border:0.5px solid #7a7a7a;box-sizing:border-box;border-radius:3px;"></div>
    <div class="abs" style="left:201px;top:95px;width:5px;height:10px;background:#cfcfcf;"></div>
  </div>
  <!-- list icons & items -->
  <svg class="abs" style="left:0;top:110px" width="230" height="200">
    <defs>
      <linearGradient id="gw" x1="0" y1="0" x2="0" y2="1"><stop offset="0" stop-color="#fafafa"/><stop offset="0.45" stop-color="#d8d8d8"/><stop offset="0.7" stop-color="#f4f4f4"/><stop offset="1" stop-color="#dedede"/></linearGradient>
      <linearGradient id="gb" x1="0" y1="0" x2="0" y2="1"><stop offset="0" stop-color="#f0f0f0"/><stop offset="1" stop-color="#d4d4d4"/></linearGradient>
      <g id="pk"><path d="M4.4 0.8 L16.3 0.8 L16.3 9.2 L13.3 15.2 L1.3 15.2 L1.3 6.3 Z" fill="url(#gw)" stroke="#5a5a5a" stroke-width="1.1" stroke-linejoin="round"/><path d="M4.2 10.7 Q8 7.2 14.7 6.4 L12.7 10.7 Z" fill="#3cb364"/></g>
    </defs>
    <use href="#pk" x="20" y="14"/><use href="#pk" x="20" y="40"/><use href="#pk" x="20" y="66"/><use href="#pk" x="20" y="92"/>
    <use href="#pk" x="16" y="123"/>
    <g transform="translate(42,123)"><path d="M1 5 L4.5 0.8 L16 0.8 L16 10.5 L12.5 15.5 L1 15.5Z" fill="url(#gb)" stroke="#5a5a5a" stroke-width="1.1" stroke-linejoin="round"/><path d="M12.5 5 L12.5 15.5 M12.5 5 L16 0.8" fill="none" stroke="#5a5a5a" stroke-width="0.9"/><path d="M12.5 5 L16 0.8 L16 10.5 L12.5 15.5Z" fill="#c4c4c4"/><path d="M1 5 L4.5 0.8 L16 0.8 L12.5 5Z" fill="#fff" stroke="#35b35a" stroke-width="1.2" stroke-linejoin="round"/></g>
    <g transform="translate(68,123)"><path d="M1 5 L4.5 0.8 L16 0.8 L16 10.5 L12.5 15.5 L1 15.5Z" fill="url(#gb)" stroke="#5a5a5a" stroke-width="1.1" stroke-linejoin="round"/><path d="M12.5 5 L16 0.8 L16 10.5 L12.5 15.5Z" fill="#c4c4c4" stroke="#5a5a5a" stroke-width="0.9"/><path d="M1 5 L4.5 0.8 L16 0.8 L12.5 5Z" fill="#42b866" stroke="#35a858" stroke-width="1" stroke-linejoin="round"/></g>
    <path d="M97.5 129.5 L105.5 129.5 L101.5 134Z" fill="#5a5a5a"/>
    <path d="M124.5 127.5 L131.5 134.5 M131.5 127.5 L124.5 134.5" stroke="#333" stroke-width="1.9"/>
    <g transform="translate(154,131)"><path id="gear" fill="#f4f4f4" stroke="#6a6a6a" stroke-width="1" d="M-1.3 -7.5 L1.3 -7.5 L1.8 -5.6 L3.1 -5 L4.8 -6 L6 -4.8 L5 -3.1 L5.6 -1.8 L7.5 -1.3 L7.5 1.3 L5.6 1.8 L5 3.1 L6 4.8 L4.8 6 L3.1 5 L1.8 5.6 L1.3 7.5 L-1.3 7.5 L-1.8 5.6 L-3.1 5 L-4.8 6 L-6 4.8 L-5 3.1 L-5.6 1.8 L-7.5 1.3 L-7.5 -1.3 L-5.6 -1.8 L-5 -3.1 L-6 -4.8 L-4.8 -6 L-3.1 -5 L-1.8 -5.6Z"/><circle r="2.6" fill="none" stroke="#6a6a6a" stroke-width="1"/></g>
  </svg>
  <div class="abs item" style="top:126px">Pockets 1</div>
  <div class="abs item" style="top:152px">Pockets 2</div>
  <div class="abs item" style="top:178px">Pockets 3</div>
  <div class="abs item" style="top:204px">Pockets 4</div>
  <div class="abs hr" style="top:266px"></div>
  <div class="abs cb" style="left:11px;top:279px"></div><div class="abs sec" style="left:31px;top:280px">Stock Contours</div>
  <div class="abs hr" style="top:306px"></div>
  <div class="abs cb" style="left:11px;top:319px"></div><div class="abs sec" style="left:31px;top:320px">Rest Machining</div>
  <div class="abs hr" style="top:346px"></div>
  <div class="abs cb" style="left:11px;top:359px"></div><div class="abs sec" style="left:31px;top:360px">Tool Orientation</div>
  <div class="abs" style="left:0;top:382px;width:248px;height:1px;background:#c8c8c8"></div>
  <svg class="abs" style="left:8px;top:395px" width="13" height="13"><circle cx="6.5" cy="6.5" r="6" fill="#111"/><rect x="5.5" y="5.5" width="2.2" height="5" fill="#fff"/><circle cx="6.6" cy="3.4" r="1.2" fill="#fff"/></svg>
  <div class="abs btn" style="left:107px;top:391px;width:58px;">OK</div>
  <div class="abs btn" style="left:177px;top:391px;width:58px;">Cancel</div>
</div>
</body></html>
